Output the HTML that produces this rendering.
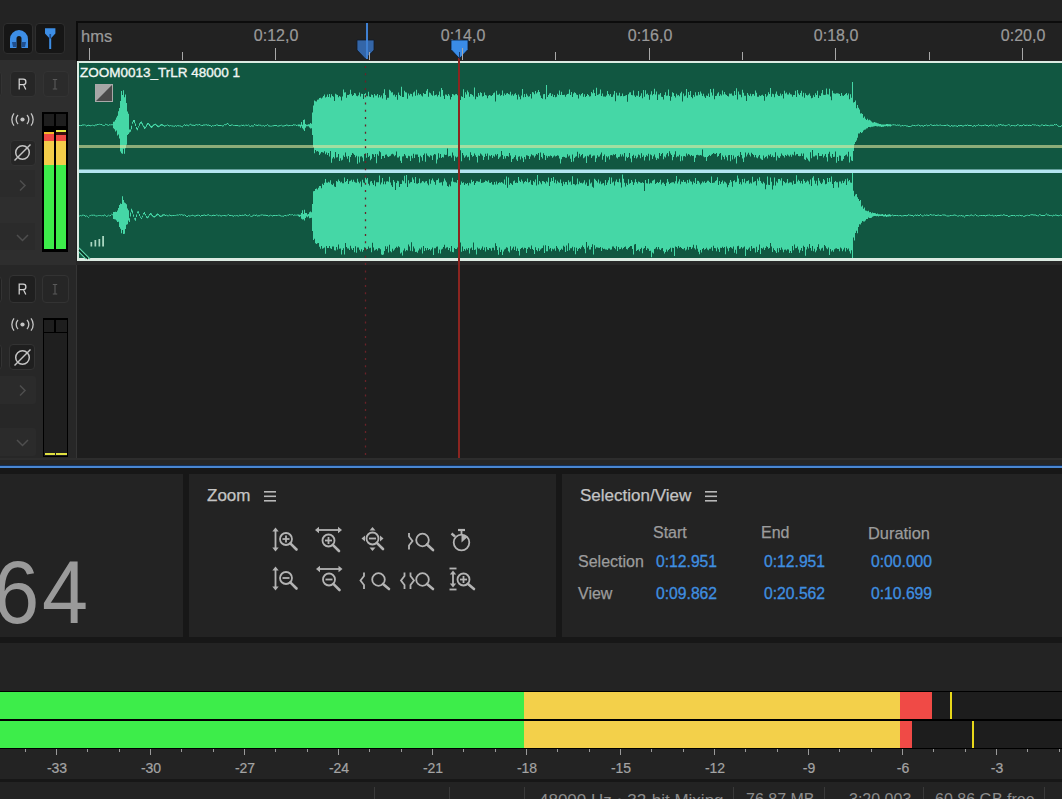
<!DOCTYPE html>
<html><head><meta charset="utf-8">
<style>
*{margin:0;padding:0;box-sizing:border-box}
html,body{width:1062px;height:799px;overflow:hidden;background:#232323;font-family:"Liberation Sans",sans-serif}
.a{position:absolute}
.btn{position:absolute;background:#1f1f1f;border:1px solid #353535;border-radius:4px}
.lbl{position:absolute;color:#9c9c9c;font-size:16px;white-space:nowrap;line-height:1;-webkit-text-stroke:0.25px currentColor}
.val{position:absolute;color:#3f8fe0;font-size:15.7px;white-space:nowrap;line-height:1;-webkit-text-stroke:0.3px currentColor}
.tick{position:absolute;width:1px;background:#a8a8a8;z-index:3}
.rl{position:absolute;color:#9a9a9a;font-size:16px;line-height:1;white-space:nowrap;-webkit-text-stroke:0.2px currentColor}
.gl{position:absolute;color:#a0a0a0;font-size:13px;line-height:1;white-space:nowrap}
.sb{position:absolute;color:#8c8c8c;font-size:16px;line-height:1;white-space:nowrap;top:792px}
.sep{position:absolute;width:1px;background:#3a3a3a;top:787px;height:12px}
</style></head><body>

<!-- top area -->
<div class="a" style="left:0;top:0;width:1062px;height:22px;background:#232323"></div>

<!-- magnet & marker buttons -->
<div class="btn" style="left:3px;top:23px;width:30px;height:31px;background:#161616;border-color:#2e2e2e"></div>
<div class="btn" style="left:35px;top:23px;width:30px;height:31px;background:#161616;border-color:#2e2e2e"></div>
<svg class="a" style="left:0;top:0" width="80" height="60">
  <path d="M10,48 L10,39 A9,9 0 0 1 28,39 L28,48 L21.5,48 L21.5,38.5 A2.5,2.5 0 0 0 16.5,38.5 L16.5,48 Z" fill="#3d8ee6"/>
  <path d="M12,42 L16,42 L16,47 L13,47 Z" fill="#1f4f90"/>
  <path d="M22,42 L26,42 L25,47 L22,47 Z" fill="#1f4f90"/>
  <path d="M45,28.2 L55.4,28.2 L55.4,33.5 L51.2,38 L51.2,49 L49.2,49 L49.2,38 L45,33.5 Z" fill="#3d8ee6"/>
  <rect x="49.4" y="34" width="1.7" height="4.5" fill="#1f4f90"/>
</svg>

<!-- ruler -->
<div class="a" style="left:75.5px;top:21px;width:987px;height:40px;background:#222;border-top:2px solid #0c0c0c;border-left:2px solid #0c0c0c"></div>
<div class="rl" style="left:81px;top:27.5px;font-size:16.5px">hms</div>
<div class="tick" style="left:89px;top:48px;height:12px"></div>
<div class="tick" style="left:182px;top:52px;height:8px"></div>
<div class="tick" style="left:275px;top:48px;height:12px"></div>
<div class="rl" style="left:253.8px;top:28px;width:44.5px;text-align:center">0:12,0</div>
<div class="tick" style="left:369px;top:52px;height:8px"></div>
<div class="tick" style="left:462px;top:48px;height:12px"></div>
<div class="rl" style="left:440.8px;top:28px;width:44.5px;text-align:center">0:14,0</div>
<div class="tick" style="left:555px;top:52px;height:8px"></div>
<div class="tick" style="left:649px;top:48px;height:12px"></div>
<div class="rl" style="left:627.8px;top:28px;width:44.5px;text-align:center">0:16,0</div>
<div class="tick" style="left:742px;top:52px;height:8px"></div>
<div class="tick" style="left:835px;top:48px;height:12px"></div>
<div class="rl" style="left:813.8px;top:28px;width:44.5px;text-align:center">0:18,0</div>
<div class="tick" style="left:929px;top:52px;height:8px"></div>
<div class="tick" style="left:1022px;top:48px;height:12px"></div>
<div class="rl" style="left:1000.8px;top:28px;width:44.5px;text-align:center">0:20,0</div>

<!-- track 1 header -->
<div class="a" style="left:0;top:60px;width:75.5px;height:205px;background:#2e2e2e"></div>
<div class="btn" style="left:-24px;top:71px;width:26px;height:26px;background:#262626;border-color:#333"></div>
<div class="btn" style="left:10px;top:71px;width:26px;height:26px;background:#262626;border-color:#333"></div>
<div class="btn" style="left:43px;top:71px;width:26px;height:26px;background:#2b2b2b;border-color:#333"></div>

<div class="btn" style="left:10px;top:140px;width:26px;height:26px;background:#262626;border-color:#333"></div>
<div class="a" style="left:0;top:170px;width:35px;height:27px;background:#2b2b2b"></div>
<div class="a" style="left:0;top:223px;width:35px;height:27px;background:#2b2b2b"></div>
<svg class="a" style="left:0;top:0" width="76" height="470">
<circle cx="22.5" cy="119.5" r="2.1" fill="#c4c4c4"/>
<path d="M18,115.0 A6.5,6.5 0 0 0 18,124.0" stroke="#c4c4c4" stroke-width="1.3" fill="none"/>
<path d="M27,115.0 A6.5,6.5 0 0 1 27,124.0" stroke="#c4c4c4" stroke-width="1.3" fill="none"/>
<path d="M14,113.3 A10,10 0 0 0 14,125.7" stroke="#c4c4c4" stroke-width="1.3" fill="none"/>
<path d="M31,113.3 A10,10 0 0 1 31,125.7" stroke="#c4c4c4" stroke-width="1.3" fill="none"/>
<circle cx="22.5" cy="152.5" r="6.8" stroke="#c4c4c4" stroke-width="1.5" fill="none"/>
<line x1="14.5" y1="160.5" x2="30.5" y2="144.5" stroke="#c4c4c4" stroke-width="1.5"/>
<path d="M52.8,79.5 H57.2 M55,79.5 V89 M52.8,89 H57.2" stroke="#5a5a5a" stroke-width="1.1" fill="none"/>
<path d="M19.2,89.5 V79.2 H23.2 A2.7,2.7 0 0 1 23.2,84.6 H19.2 M23.4,84.6 L25.8,89.5" stroke="#d4d4d4" stroke-width="1.25" fill="none"/>
<path d="M20,180.5 L25,185.5 L20,190.5" stroke="#4e4e4e" stroke-width="1.5" fill="none"/>
<path d="M17,235 L22.5,240.5 L28,235" stroke="#4e4e4e" stroke-width="1.5" fill="none"/>
</svg>
<div class="a" style="left:42px;top:112px;width:26px;height:140px;background:#000"></div>
<div class="a" style="left:44px;top:114px;width:10px;height:12px;background:#1e1e1e"></div>
<div class="a" style="left:56px;top:114px;width:10px;height:12px;background:#1e1e1e"></div>
<div class="a" style="left:44px;top:141px;width:10px;height:24px;background:#f3cd49"></div>
<div class="a" style="left:44px;top:165px;width:10px;height:84px;background:#3ded4a"></div>
<div class="a" style="left:56px;top:141px;width:10px;height:24px;background:#f3cd49"></div>
<div class="a" style="left:56px;top:165px;width:10px;height:84px;background:#3ded4a"></div>
<div class="a" style="left:44px;top:133px;width:10px;height:8px;background:#ef4a44"></div>
<div class="a" style="left:44px;top:131.5px;width:10px;height:2px;background:#f2b82a"></div>
<div class="a" style="left:56px;top:134.5px;width:10px;height:6.5px;background:#ef4a44"></div>
<div class="a" style="left:56px;top:132px;width:10px;height:2.5px;background:#3a1010"></div>
<div class="a" style="left:56px;top:130px;width:10px;height:2px;background:#e6ea40"></div>

<!-- clip -->
<div class="a" style="left:76px;top:261px;width:986px;height:4px;background:#282828"></div>
<div class="a" style="left:77px;top:61px;width:985px;height:200px;background:#115741;border:2px solid #dcebe2;border-bottom-width:3px;border-right:none"></div>
<svg class="a" style="left:0;top:0" width="1062" height="265">
  <path d="M79,125.1 80,125.1 80,125.2 81,125.2 81,125.0 82,125.0 82,124.6 83,124.6 83,124.6 84,124.6 84,124.4 85,124.4 85,124.7 86,124.7 86,125.5 87,125.5 87,125.1 88,125.1 88,124.8 89,124.8 89,125.1 90,125.1 90,125.3 91,125.3 91,125.2 92,125.2 92,124.7 93,124.7 93,124.9 94,124.9 94,125.3 95,125.3 95,124.6 96,124.6 96,124.6 97,124.6 97,124.0 98,124.0 98,123.9 99,123.9 99,123.7 100,123.7 100,124.2 101,124.2 101,124.1 102,124.1 102,124.7 103,124.7 103,124.9 104,124.9 104,124.9 105,124.9 105,123.8 106,123.8 106,124.2 107,124.2 107,124.6 108,124.6 108,124.9 109,124.9 109,124.3 110,124.3 110,124.4 111,124.4 111,124.3 112,124.3 112,124.3 113,124.3 113,121.8 114,121.8 114,121.6 115,121.6 115,119.8 116,119.8 116,117.4 117,117.4 117,115.7 118,115.7 118,111.2 119,111.2 119,107.9 120,107.9 120,100.9 121,100.9 121,90.9 122,90.9 122,94.9 123,94.9 123,90.3 124,90.3 124,97.3 125,97.3 125,94.4 126,94.4 126,102.9 127,102.9 127,111.4 128,111.4 128,113.7 129,113.7 129,129.5 130,129.5 130,129.5 131,129.5 131,125.8 132,125.8 132,121.7 133,121.7 133,119.9 134,119.9 134,119.9 135,119.9 135,123.6 136,123.6 136,126.9 137,126.9 137,128.1 138,128.1 138,126.2 139,126.2 139,123.3 140,123.3 140,121.9 141,121.9 141,121.6 142,121.6 142,123.3 143,123.3 143,125.6 144,125.6 144,126.6 145,126.6 145,126.7 146,126.7 146,124.6 147,124.6 147,122.9 148,122.9 148,122.9 149,122.9 149,123.9 150,123.9 150,125.5 151,125.5 151,126.1 152,126.1 152,125.6 153,125.6 153,124.6 154,124.6 154,123.9 155,123.9 155,123.8 156,123.8 156,124.5 157,124.5 157,125.3 158,125.3 158,125.7 159,125.7 159,125.4 160,125.4 160,124.4 161,124.4 161,123.9 162,123.9 162,124.2 163,124.2 163,124.9 164,124.9 164,125.4 165,125.4 165,125.3 166,125.3 166,124.9 167,124.9 167,124.4 168,124.4 168,125.1 169,125.1 169,125.5 170,125.5 170,125.2 171,125.2 171,125.4 172,125.4 172,125.6 173,125.6 173,125.7 174,125.7 174,125.8 175,125.8 175,125.2 176,125.2 176,125.8 177,125.8 177,124.9 178,124.9 178,125.3 179,125.3 179,125.4 180,125.4 180,125.6 181,125.6 181,126.2 182,126.2 182,126.3 183,126.3 183,125.2 184,125.2 184,124.3 185,124.3 185,125.1 186,125.1 186,124.6 187,124.6 187,124.8 188,124.8 188,125.3 189,125.3 189,124.4 190,124.4 190,123.8 191,123.8 191,124.5 192,124.5 192,124.8 193,124.8 193,124.8 194,124.8 194,125.0 195,125.0 195,124.6 196,124.6 196,124.2 197,124.2 197,124.5 198,124.5 198,124.4 199,124.4 199,124.0 200,124.0 200,124.7 201,124.7 201,124.9 202,124.9 202,125.1 203,125.1 203,124.6 204,124.6 204,124.6 205,124.6 205,124.4 206,124.4 206,124.3 207,124.3 207,124.8 208,124.8 208,124.6 209,124.6 209,125.0 210,125.0 210,125.2 211,125.2 211,126.0 212,126.0 212,124.9 213,124.9 213,125.4 214,125.4 214,125.2 215,125.2 215,125.1 216,125.1 216,124.4 217,124.4 217,124.5 218,124.5 218,125.1 219,125.1 219,125.1 220,125.1 220,125.1 221,125.1 221,124.9 222,124.9 222,125.5 223,125.5 223,125.3 224,125.3 224,124.2 225,124.2 225,124.3 226,124.3 226,123.8 227,123.8 227,123.0 228,123.0 228,123.8 229,123.8 229,125.0 230,125.0 230,125.0 231,125.0 231,124.5 232,124.5 232,124.4 233,124.4 233,125.2 234,125.2 234,125.2 235,125.2 235,125.1 236,125.1 236,125.1 237,125.1 237,125.1 238,125.1 238,125.4 239,125.4 239,125.5 240,125.5 240,125.4 241,125.4 241,124.7 242,124.7 242,125.1 243,125.1 243,124.8 244,124.8 244,125.4 245,125.4 245,124.7 246,124.7 246,124.8 247,124.8 247,124.9 248,124.9 248,124.4 249,124.4 249,125.5 250,125.5 250,125.9 251,125.9 251,125.3 252,125.3 252,125.5 253,125.5 253,125.5 254,125.5 254,124.1 255,124.1 255,124.7 256,124.7 256,124.8 257,124.8 257,125.0 258,125.0 258,124.5 259,124.5 259,124.7 260,124.7 260,124.8 261,124.8 261,125.4 262,125.4 262,125.4 263,125.4 263,125.2 264,125.2 264,125.8 265,125.8 265,125.2 266,125.2 266,124.9 267,124.9 267,124.2 268,124.2 268,125.3 269,125.3 269,125.6 270,125.6 270,125.7 271,125.7 271,125.7 272,125.7 272,125.4 273,125.4 273,125.3 274,125.3 274,125.1 275,125.1 275,125.0 276,125.0 276,125.0 277,125.0 277,125.7 278,125.7 278,125.6 279,125.6 279,125.3 280,125.3 280,124.9 281,124.9 281,124.7 282,124.7 282,125.6 283,125.6 283,125.6 284,125.6 284,125.3 285,125.3 285,125.0 286,125.0 286,124.5 287,124.5 287,124.8 288,124.8 288,125.3 289,125.3 289,125.0 290,125.0 290,124.9 291,124.9 291,124.9 292,124.9 292,125.0 293,125.0 293,124.3 294,124.3 294,124.6 295,124.6 295,124.4 296,124.4 296,125.1 297,125.1 297,124.7 298,124.7 298,124.4 299,124.4 299,124.5 300,124.5 300,124.7 301,124.7 301,122.0 302,122.0 302,124.8 303,124.8 303,119.9 304,119.9 304,119.4 305,119.4 305,123.9 306,123.9 306,124.8 307,124.8 307,124.8 308,124.8 308,124.2 309,124.2 309,124.2 310,124.2 310,123.0 311,123.0 311,123.8 312,123.8 312,112.4 313,112.4 313,105.5 314,105.5 314,100.6 315,100.6 315,101.3 316,101.3 316,101.4 317,101.4 317,99.7 318,99.7 318,99.5 319,99.5 319,98.1 320,98.1 320,97.7 321,97.7 321,98.5 322,98.5 322,97.5 323,97.5 323,96.1 324,96.1 324,94.4 325,94.4 325,97.6 326,97.6 326,96.8 327,96.8 327,94.5 328,94.5 328,97.0 329,97.0 329,94.1 330,94.1 330,97.5 331,97.5 331,94.2 332,94.2 332,96.0 333,96.0 333,96.8 334,96.8 334,100.9 335,100.9 335,93.7 336,93.7 336,94.5 337,94.5 337,95.0 338,95.0 338,97.3 339,97.3 339,96.1 340,96.1 340,96.7 341,96.7 341,100.6 342,100.6 342,96.5 343,96.5 343,89.6 344,89.6 344,92.4 345,92.4 345,92.2 346,92.2 346,97.7 347,97.7 347,95.1 348,95.1 348,95.1 349,95.1 349,94.2 350,94.2 350,89.8 351,89.8 351,94.2 352,94.2 352,96.1 353,96.1 353,94.9 354,94.9 354,92.9 355,92.9 355,93.5 356,93.5 356,95.7 357,95.7 357,96.3 358,96.3 358,95.2 359,95.2 359,92.6 360,92.6 360,96.4 361,96.4 361,93.7 362,93.7 362,93.9 363,93.9 363,98.9 364,98.9 364,93.9 365,93.9 365,93.3 366,93.3 366,95.7 367,95.7 367,96.2 368,96.2 368,91.7 369,91.7 369,96.4 370,96.4 370,96.9 371,96.9 371,94.5 372,94.5 372,94.9 373,94.9 373,97.6 374,97.6 374,94.1 375,94.1 375,95.4 376,95.4 376,95.6 377,95.6 377,93.9 378,93.9 378,97.4 379,97.4 379,95.0 380,95.0 380,97.2 381,97.2 381,95.6 382,95.6 382,98.6 383,98.6 383,93.3 384,93.3 384,89.3 385,89.3 385,94.9 386,94.9 386,99.8 387,99.8 387,97.7 388,97.7 388,97.8 389,97.8 389,89.7 390,89.7 390,90.7 391,90.7 391,92.4 392,92.4 392,92.2 393,92.2 393,95.2 394,95.2 394,94.5 395,94.5 395,96.8 396,96.8 396,95.1 397,95.1 397,99.8 398,99.8 398,92.6 399,92.6 399,95.0 400,95.0 400,95.9 401,95.9 401,86.8 402,86.8 402,96.9 403,96.9 403,96.9 404,96.9 404,90.7 405,90.7 405,92.2 406,92.2 406,92.6 407,92.6 407,98.8 408,98.8 408,93.4 409,93.4 409,95.5 410,95.5 410,93.8 411,93.8 411,93.9 412,93.9 412,96.4 413,96.4 413,92.6 414,92.6 414,91.5 415,91.5 415,95.8 416,95.8 416,89.7 417,89.7 417,95.3 418,95.3 418,93.2 419,93.2 419,94.8 420,94.8 420,93.9 421,93.9 421,95.6 422,95.6 422,96.6 423,96.6 423,93.1 424,93.1 424,93.9 425,93.9 425,94.0 426,94.0 426,90.8 427,90.8 427,89.1 428,89.1 428,96.7 429,96.7 429,92.4 430,92.4 430,93.2 431,93.2 431,94.7 432,94.7 432,95.7 433,95.7 433,90.9 434,90.9 434,95.5 435,95.5 435,95.0 436,95.0 436,94.5 437,94.5 437,96.4 438,96.4 438,94.9 439,94.9 439,91.6 440,91.6 440,96.8 441,96.8 441,88.1 442,88.1 442,90.0 443,90.0 443,95.8 444,95.8 444,98.9 445,98.9 445,94.6 446,94.6 446,94.8 447,94.8 447,95.9 448,95.9 448,94.1 449,94.1 449,95.4 450,95.4 450,99.5 451,99.5 451,96.9 452,96.9 452,94.1 453,94.1 453,94.6 454,94.6 454,95.2 455,95.2 455,94.3 456,94.3 456,94.0 457,94.0 457,95.2 458,95.2 458,93.9 459,93.9 459,95.2 460,95.2 460,100.0 461,100.0 461,96.2 462,96.2 462,96.9 463,96.9 463,89.2 464,89.2 464,98.1 465,98.1 465,92.2 466,92.2 466,94.5 467,94.5 467,90.6 468,90.6 468,92.2 469,92.2 469,96.8 470,96.8 470,94.1 471,94.1 471,94.2 472,94.2 472,95.0 473,95.0 473,96.4 474,96.4 474,87.6 475,87.6 475,99.2 476,99.2 476,96.5 477,96.5 477,96.9 478,96.9 478,93.1 479,93.1 479,95.4 480,95.4 480,92.2 481,92.2 481,92.9 482,92.9 482,96.5 483,96.5 483,95.9 484,95.9 484,92.6 485,92.6 485,94.9 486,94.9 486,95.6 487,95.6 487,98.2 488,98.2 488,95.8 489,95.8 489,95.0 490,95.0 490,95.6 491,95.6 491,96.1 492,96.1 492,94.9 493,94.9 493,93.2 494,93.2 494,92.5 495,92.5 495,101.4 496,101.4 496,90.8 497,90.8 497,94.7 498,94.7 498,94.7 499,94.7 499,93.8 500,93.8 500,95.8 501,95.8 501,94.9 502,94.9 502,90.4 503,90.4 503,95.8 504,95.8 504,93.4 505,93.4 505,95.0 506,95.0 506,93.6 507,93.6 507,93.1 508,93.1 508,93.9 509,93.9 509,94.4 510,94.4 510,91.8 511,91.8 511,95.6 512,95.6 512,94.2 513,94.2 513,95.7 514,95.7 514,94.3 515,94.3 515,93.3 516,93.3 516,95.0 517,95.0 517,99.5 518,99.5 518,94.4 519,94.4 519,96.8 520,96.8 520,99.3 521,99.3 521,95.6 522,95.6 522,89.0 523,89.0 523,97.2 524,97.2 524,94.0 525,94.0 525,97.1 526,97.1 526,93.8 527,93.8 527,95.5 528,95.5 528,96.7 529,96.7 529,96.3 530,96.3 530,94.0 531,94.0 531,98.6 532,98.6 532,92.1 533,92.1 533,92.5 534,92.5 534,94.3 535,94.3 535,91.0 536,91.0 536,93.4 537,93.4 537,92.3 538,92.3 538,90.0 539,90.0 539,92.0 540,92.0 540,95.6 541,95.6 541,98.0 542,98.0 542,98.7 543,98.7 543,94.2 544,94.2 544,94.1 545,94.1 545,99.3 546,99.3 546,85.1 547,85.1 547,96.9 548,96.9 548,94.9 549,94.9 549,93.6 550,93.6 550,92.9 551,92.9 551,96.1 552,96.1 552,94.2 553,94.2 553,96.9 554,96.9 554,95.1 555,95.1 555,97.2 556,97.2 556,96.7 557,96.7 557,93.8 558,93.8 558,95.0 559,95.0 559,90.5 560,90.5 560,95.0 561,95.0 561,91.8 562,91.8 562,95.1 563,95.1 563,95.0 564,95.0 564,94.7 565,94.7 565,96.7 566,96.7 566,94.8 567,94.8 567,93.9 568,93.9 568,93.7 569,93.7 569,89.5 570,89.5 570,94.9 571,94.9 571,92.0 572,92.0 572,97.1 573,97.1 573,93.6 574,93.6 574,92.2 575,92.2 575,93.1 576,93.1 576,94.6 577,94.6 577,95.0 578,95.0 578,98.5 579,98.5 579,94.3 580,94.3 580,95.6 581,95.6 581,94.0 582,94.0 582,93.0 583,93.0 583,96.7 584,96.7 584,94.2 585,94.2 585,97.0 586,97.0 586,96.1 587,96.1 587,94.0 588,94.0 588,94.9 589,94.9 589,96.6 590,96.6 590,96.3 591,96.3 591,92.0 592,92.0 592,93.2 593,93.2 593,89.8 594,89.8 594,93.1 595,93.1 595,96.0 596,96.0 596,87.7 597,87.7 597,95.0 598,95.0 598,94.4 599,94.4 599,93.7 600,93.7 600,89.4 601,89.4 601,96.0 602,96.0 602,93.5 603,93.5 603,96.4 604,96.4 604,96.5 605,96.5 605,96.7 606,96.7 606,95.4 607,95.4 607,91.1 608,91.1 608,93.9 609,93.9 609,95.4 610,95.4 610,94.1 611,94.1 611,97.1 612,97.1 612,96.7 613,96.7 613,94.5 614,94.5 614,91.0 615,91.0 615,101.2 616,101.2 616,92.8 617,92.8 617,95.6 618,95.6 618,95.4 619,95.4 619,92.8 620,92.8 620,96.2 621,96.2 621,96.0 622,96.0 622,93.5 623,93.5 623,96.2 624,96.2 624,96.0 625,96.0 625,95.6 626,95.6 626,94.9 627,94.9 627,101.7 628,101.7 628,94.2 629,94.2 629,92.5 630,92.5 630,92.3 631,92.3 631,95.1 632,95.1 632,95.2 633,95.2 633,90.5 634,90.5 634,95.5 635,95.5 635,97.1 636,97.1 636,95.5 637,95.5 637,95.7 638,95.7 638,91.0 639,91.0 639,96.9 640,96.9 640,95.7 641,95.7 641,93.3 642,93.3 642,98.2 643,98.2 643,90.1 644,90.1 644,96.7 645,96.7 645,90.3 646,90.3 646,94.3 647,94.3 647,93.5 648,93.5 648,95.1 649,95.1 649,99.7 650,99.7 650,94.5 651,94.5 651,91.3 652,91.3 652,95.3 653,95.3 653,94.1 654,94.1 654,88.7 655,88.7 655,94.6 656,94.6 656,91.6 657,91.6 657,100.1 658,100.1 658,94.5 659,94.5 659,94.4 660,94.4 660,92.9 661,92.9 661,96.7 662,96.7 662,97.1 663,97.1 663,99.6 664,99.6 664,95.0 665,95.0 665,92.3 666,92.3 666,95.8 667,95.8 667,95.5 668,95.5 668,89.6 669,89.6 669,95.9 670,95.9 670,100.8 671,100.8 671,96.7 672,96.7 672,92.3 673,92.3 673,93.1 674,93.1 674,95.9 675,95.9 675,97.6 676,97.6 676,93.8 677,93.8 677,95.6 678,95.6 678,95.0 679,95.0 679,96.3 680,96.3 680,93.2 681,93.2 681,91.7 682,91.7 682,101.5 683,101.5 683,93.4 684,93.4 684,96.3 685,96.3 685,95.6 686,95.6 686,88.9 687,88.9 687,97.8 688,97.8 688,92.0 689,92.0 689,95.1 690,95.1 690,91.0 691,91.0 691,96.9 692,96.9 692,98.2 693,98.2 693,95.1 694,95.1 694,96.8 695,96.8 695,92.3 696,92.3 696,95.6 697,95.6 697,95.4 698,95.4 698,92.0 699,92.0 699,94.8 700,94.8 700,91.6 701,91.6 701,93.4 702,93.4 702,96.0 703,96.0 703,93.7 704,93.7 704,96.6 705,96.6 705,98.0 706,98.0 706,95.6 707,95.6 707,96.0 708,96.0 708,93.4 709,93.4 709,96.9 710,96.9 710,89.1 711,89.1 711,92.4 712,92.4 712,95.6 713,95.6 713,88.7 714,88.7 714,99.2 715,99.2 715,95.9 716,95.9 716,95.7 717,95.7 717,93.6 718,93.6 718,92.2 719,92.2 719,96.1 720,96.1 720,94.2 721,94.2 721,95.4 722,95.4 722,90.6 723,90.6 723,94.5 724,94.5 724,92.1 725,92.1 725,94.2 726,94.2 726,95.1 727,95.1 727,96.0 728,96.0 728,96.5 729,96.5 729,93.6 730,93.6 730,93.7 731,93.7 731,93.6 732,93.6 732,95.6 733,95.6 733,95.7 734,95.7 734,91.0 735,91.0 735,94.9 736,94.9 736,88.2 737,88.2 737,99.6 738,99.6 738,91.6 739,91.6 739,94.4 740,94.4 740,94.8 741,94.8 741,97.3 742,97.3 742,89.8 743,89.8 743,92.7 744,92.7 744,95.8 745,95.8 745,95.7 746,95.7 746,101.1 747,101.1 747,93.0 748,93.0 748,94.8 749,94.8 749,96.0 750,96.0 750,93.7 751,93.7 751,96.3 752,96.3 752,94.2 753,94.2 753,94.0 754,94.0 754,95.8 755,95.8 755,90.4 756,90.4 756,92.7 757,92.7 757,96.7 758,96.7 758,96.7 759,96.7 759,95.3 760,95.3 760,96.1 761,96.1 761,95.2 762,95.2 762,94.8 763,94.8 763,96.1 764,96.1 764,100.7 765,100.7 765,93.9 766,93.9 766,96.7 767,96.7 767,95.6 768,95.6 768,92.2 769,92.2 769,93.9 770,93.9 770,88.0 771,88.0 771,96.8 772,96.8 772,93.7 773,93.7 773,94.2 774,94.2 774,97.2 775,97.2 775,93.7 776,93.7 776,91.6 777,91.6 777,94.8 778,94.8 778,96.1 779,96.1 779,96.1 780,96.1 780,93.4 781,93.4 781,95.6 782,95.6 782,93.9 783,93.9 783,98.5 784,98.5 784,90.7 785,90.7 785,93.4 786,93.4 786,92.6 787,92.6 787,94.4 788,94.4 788,94.6 789,94.6 789,92.7 790,92.7 790,94.3 791,94.3 791,94.5 792,94.5 792,96.7 793,96.7 793,95.0 794,95.0 794,95.0 795,95.0 795,90.8 796,90.8 796,96.9 797,96.9 797,89.9 798,89.9 798,93.4 799,93.4 799,95.1 800,95.1 800,92.9 801,92.9 801,90.8 802,90.8 802,96.4 803,96.4 803,92.7 804,92.7 804,97.8 805,97.8 805,93.2 806,93.2 806,94.9 807,94.9 807,95.4 808,95.4 808,94.8 809,94.8 809,93.5 810,93.5 810,95.8 811,95.8 811,98.3 812,98.3 812,97.8 813,97.8 813,95.3 814,95.3 814,97.0 815,97.0 815,93.2 816,93.2 816,95.1 817,95.1 817,90.8 818,90.8 818,98.1 819,98.1 819,95.6 820,95.6 820,95.9 821,95.9 821,93.3 822,93.3 822,89.9 823,89.9 823,94.8 824,94.8 824,94.9 825,94.9 825,94.7 826,94.7 826,88.4 827,88.4 827,94.3 828,94.3 828,94.6 829,94.6 829,88.8 830,88.8 830,96.4 831,96.4 831,100.2 832,100.2 832,90.7 833,90.7 833,93.3 834,93.3 834,93.4 835,93.4 835,93.8 836,93.8 836,93.2 837,93.2 837,93.3 838,93.3 838,93.4 839,93.4 839,94.1 840,94.1 840,96.1 841,96.1 841,93.0 842,93.0 842,95.4 843,95.4 843,96.1 844,96.1 844,94.9 845,94.9 845,94.1 846,94.1 846,93.0 847,93.0 847,95.3 848,95.3 848,93.6 849,93.6 849,99.3 850,99.3 850,94.3 851,94.3 851,97.8 852,97.8 852,82.0 853,82.0 853,102.6 854,102.6 854,102.1 855,102.1 855,100.5 856,100.5 856,108.3 857,108.3 857,105.0 858,105.0 858,107.8 859,107.8 859,109.6 860,109.6 860,113.5 861,113.5 861,113.3 862,113.3 862,114.0 863,114.0 863,117.7 864,117.7 864,116.5 865,116.5 865,118.7 866,118.7 866,120.1 867,120.1 867,118.8 868,118.8 868,120.3 869,120.3 869,119.8 870,119.8 870,120.6 871,120.6 871,121.4 872,121.4 872,122.6 873,122.6 873,122.4 874,122.4 874,121.9 875,121.9 875,122.4 876,122.4 876,122.8 877,122.8 877,123.3 878,123.3 878,123.6 879,123.6 879,124.1 880,124.1 880,123.9 881,123.9 881,124.5 882,124.5 882,124.6 883,124.6 883,124.5 884,124.5 884,124.5 885,124.5 885,124.4 886,124.4 886,124.1 887,124.1 887,124.1 888,124.1 888,124.3 889,124.3 889,124.3 890,124.3 890,124.3 891,124.3 891,124.8 892,124.8 892,124.4 893,124.4 893,124.3 894,124.3 894,124.4 895,124.4 895,124.5 896,124.5 896,125.2 897,125.2 897,124.6 898,124.6 898,124.8 899,124.8 899,124.6 900,124.6 900,125.5 901,125.5 901,125.4 902,125.4 902,125.0 903,125.0 903,125.4 904,125.4 904,125.2 905,125.2 905,124.9 906,124.9 906,125.6 907,125.6 907,125.6 908,125.6 908,126.1 909,126.1 909,126.1 910,126.1 910,125.9 911,125.9 911,125.5 912,125.5 912,124.8 913,124.8 913,125.2 914,125.2 914,125.1 915,125.1 915,125.4 916,125.4 916,125.2 917,125.2 917,124.8 918,124.8 918,124.4 919,124.4 919,125.0 920,125.0 920,125.6 921,125.6 921,125.2 922,125.2 922,125.3 923,125.3 923,125.8 924,125.8 924,125.0 925,125.0 925,124.9 926,124.9 926,124.4 927,124.4 927,125.3 928,125.3 928,125.2 929,125.2 929,124.9 930,124.9 930,124.2 931,124.2 931,124.5 932,124.5 932,125.2 933,125.2 933,125.0 934,125.0 934,124.8 935,124.8 935,125.2 936,125.2 936,124.6 937,124.6 937,124.8 938,124.8 938,125.2 939,125.2 939,124.7 940,124.7 940,124.5 941,124.5 941,124.9 942,124.9 942,124.9 943,124.9 943,124.9 944,124.9 944,125.0 945,125.0 945,125.1 946,125.1 946,124.7 947,124.7 947,124.5 948,124.5 948,125.0 949,125.0 949,125.5 950,125.5 950,125.9 951,125.9 951,125.1 952,125.1 952,125.5 953,125.5 953,125.6 954,125.6 954,125.3 955,125.3 955,125.4 956,125.4 956,125.6 957,125.6 957,126.1 958,126.1 958,125.1 959,125.1 959,125.3 960,125.3 960,125.1 961,125.1 961,125.0 962,125.0 962,125.5 963,125.5 963,125.6 964,125.6 964,124.9 965,124.9 965,124.8 966,124.8 966,125.0 967,125.0 967,124.4 968,124.4 968,125.1 969,125.1 969,125.0 970,125.0 970,125.1 971,125.1 971,125.2 972,125.2 972,125.9 973,125.9 973,125.5 974,125.5 974,125.1 975,125.1 975,125.8 976,125.8 976,125.2 977,125.2 977,124.9 978,124.9 978,124.3 979,124.3 979,125.2 980,125.2 980,125.2 981,125.2 981,125.3 982,125.3 982,125.2 983,125.2 983,125.1 984,125.1 984,124.7 985,124.7 985,124.5 986,124.5 986,125.0 987,125.0 987,125.0 988,125.0 988,125.8 989,125.8 989,125.1 990,125.1 990,124.8 991,124.8 991,124.5 992,124.5 992,125.4 993,125.4 993,124.6 994,124.6 994,125.2 995,125.2 995,125.7 996,125.7 996,125.3 997,125.3 997,125.5 998,125.5 998,124.3 999,124.3 999,124.5 1000,124.5 1000,124.0 1001,124.0 1001,124.6 1002,124.6 1002,124.8 1003,124.8 1003,124.6 1004,124.6 1004,125.2 1005,125.2 1005,125.3 1006,125.3 1006,124.9 1007,124.9 1007,124.7 1008,124.7 1008,124.2 1009,124.2 1009,124.5 1010,124.5 1010,125.7 1011,125.7 1011,125.1 1012,125.1 1012,125.2 1013,125.2 1013,124.9 1014,124.9 1014,125.3 1015,125.3 1015,125.4 1016,125.4 1016,125.1 1017,125.1 1017,124.3 1018,124.3 1018,124.4 1019,124.4 1019,125.3 1020,125.3 1020,125.0 1021,125.0 1021,125.3 1022,125.3 1022,125.0 1023,125.0 1023,124.2 1024,124.2 1024,124.8 1025,124.8 1025,125.0 1026,125.0 1026,124.8 1027,124.8 1027,124.7 1028,124.7 1028,125.0 1029,125.0 1029,124.8 1030,124.8 1030,125.0 1031,125.0 1031,124.9 1032,124.9 1032,123.9 1033,123.9 1033,124.4 1034,124.4 1034,124.5 1035,124.5 1035,124.4 1036,124.4 1036,124.9 1037,124.9 1037,124.7 1038,124.7 1038,125.1 1039,125.1 1039,125.6 1040,125.6 1040,125.4 1041,125.4 1041,124.5 1042,124.5 1042,124.4 1043,124.4 1043,125.1 1044,125.1 1044,125.0 1045,125.0 1045,124.6 1046,124.6 1046,124.8 1047,124.8 1047,125.1 1048,125.1 1048,125.2 1049,125.2 1049,125.4 1050,125.4 1050,124.8 1051,124.8 1051,124.8 1052,124.8 1052,124.8 1053,124.8 1053,124.9 1054,124.9 1054,124.0 1055,124.0 1055,124.4 1056,124.4 1056,124.1 1057,124.1 1057,125.2 1058,125.2 1058,125.8 1059,125.8 1059,126.2 1060,126.2 1060,126.0 1061,126.0 1061,125.3 1062,125.3 1062,126.2 1061,126.2 1061,126.9 1060,126.9 1060,127.1 1059,127.1 1059,126.7 1058,126.7 1058,126.1 1057,126.1 1057,125.0 1056,125.0 1056,125.3 1055,125.3 1055,124.9 1054,124.9 1054,125.8 1053,125.8 1053,125.7 1052,125.7 1052,125.7 1051,125.7 1051,125.7 1050,125.7 1050,126.3 1049,126.3 1049,126.1 1048,126.1 1048,126.0 1047,126.0 1047,125.7 1046,125.7 1046,125.5 1045,125.5 1045,125.9 1044,125.9 1044,126.0 1043,126.0 1043,125.3 1042,125.3 1042,125.4 1041,125.4 1041,126.3 1040,126.3 1040,126.5 1039,126.5 1039,126.0 1038,126.0 1038,125.6 1037,125.6 1037,125.8 1036,125.8 1036,125.3 1035,125.3 1035,125.4 1034,125.4 1034,125.3 1033,125.3 1033,124.8 1032,124.8 1032,125.8 1031,125.8 1031,125.9 1030,125.9 1030,125.7 1029,125.7 1029,125.9 1028,125.9 1028,125.6 1027,125.6 1027,125.7 1026,125.7 1026,125.9 1025,125.9 1025,125.7 1024,125.7 1024,125.1 1023,125.1 1023,125.9 1022,125.9 1022,126.2 1021,126.2 1021,125.9 1020,125.9 1020,126.2 1019,126.2 1019,125.3 1018,125.3 1018,125.2 1017,125.2 1017,126.0 1016,126.0 1016,126.3 1015,126.3 1015,126.2 1014,126.2 1014,125.8 1013,125.8 1013,126.1 1012,126.1 1012,126.0 1011,126.0 1011,126.6 1010,126.6 1010,125.4 1009,125.4 1009,125.1 1008,125.1 1008,125.6 1007,125.6 1007,125.8 1006,125.8 1006,126.2 1005,126.2 1005,126.1 1004,126.1 1004,125.5 1003,125.5 1003,125.7 1002,125.7 1002,125.5 1001,125.5 1001,124.9 1000,124.9 1000,125.4 999,125.4 999,125.2 998,125.2 998,126.4 997,126.4 997,126.2 996,126.2 996,126.6 995,126.6 995,126.1 994,126.1 994,125.5 993,125.5 993,126.3 992,126.3 992,125.4 991,125.4 991,125.7 990,125.7 990,126.0 989,126.0 989,126.7 988,126.7 988,125.9 987,125.9 987,125.9 986,125.9 986,125.4 985,125.4 985,125.6 984,125.6 984,126.0 983,126.0 983,126.1 982,126.1 982,126.2 981,126.2 981,126.1 980,126.1 980,126.1 979,126.1 979,125.2 978,125.2 978,125.8 977,125.8 977,126.1 976,126.1 976,126.7 975,126.7 975,126.0 974,126.0 974,126.4 973,126.4 973,126.8 972,126.8 972,126.1 971,126.1 971,126.0 970,126.0 970,125.9 969,125.9 969,126.0 968,126.0 968,125.3 967,125.3 967,125.9 966,125.9 966,125.7 965,125.7 965,125.8 964,125.8 964,126.5 963,126.5 963,126.4 962,126.4 962,125.9 961,125.9 961,126.0 960,126.0 960,126.2 959,126.2 959,126.0 958,126.0 958,127.0 957,127.0 957,126.5 956,126.5 956,126.3 955,126.3 955,126.2 954,126.2 954,126.5 953,126.5 953,126.4 952,126.4 952,126.0 951,126.0 951,126.8 950,126.8 950,126.4 949,126.4 949,125.9 948,125.9 948,125.4 947,125.4 947,125.6 946,125.6 946,126.0 945,126.0 945,125.9 944,125.9 944,125.8 943,125.8 943,125.8 942,125.8 942,125.8 941,125.8 941,125.4 940,125.4 940,125.6 939,125.6 939,126.1 938,126.1 938,125.7 937,125.7 937,125.5 936,125.5 936,126.1 935,126.1 935,125.7 934,125.7 934,125.9 933,125.9 933,126.1 932,126.1 932,125.4 931,125.4 931,125.1 930,125.1 930,125.8 929,125.8 929,126.1 928,126.1 928,126.2 927,126.2 927,125.3 926,125.3 926,125.8 925,125.8 925,125.9 924,125.9 924,126.7 923,126.7 923,126.2 922,126.2 922,126.1 921,126.1 921,126.5 920,126.5 920,125.9 919,125.9 919,125.3 918,125.3 918,125.7 917,125.7 917,126.1 916,126.1 916,126.3 915,126.3 915,126.0 914,126.0 914,126.1 913,126.1 913,125.7 912,125.7 912,126.4 911,126.4 911,126.8 910,126.8 910,127.0 909,127.0 909,127.0 908,127.0 908,126.5 907,126.5 907,126.5 906,126.5 906,125.8 905,125.8 905,126.1 904,126.1 904,126.3 903,126.3 903,125.9 902,125.9 902,126.3 901,126.3 901,126.4 900,126.4 900,125.5 899,125.5 899,125.7 898,125.7 898,125.5 897,125.5 897,126.1 896,126.1 896,125.4 895,125.4 895,125.3 894,125.3 894,125.2 893,125.2 893,125.3 892,125.3 892,125.7 891,125.7 891,126.6 890,126.6 890,126.3 889,126.3 889,126.3 888,126.3 888,126.4 887,126.4 887,126.1 886,126.1 886,126.3 885,126.3 885,126.2 884,126.2 884,126.7 883,126.7 883,126.7 882,126.7 882,126.9 881,126.9 881,126.5 880,126.5 880,126.6 879,126.6 879,126.3 878,126.3 878,126.5 877,126.5 877,126.3 876,126.3 876,125.9 875,125.9 875,126.2 874,126.2 874,126.5 873,126.5 873,126.8 872,126.8 872,126.8 871,126.8 871,127.3 870,127.3 870,127.1 869,127.1 869,127.0 868,127.0 868,128.2 867,128.2 867,128.4 866,128.4 866,129.4 865,129.4 865,129.8 864,129.8 864,130.6 863,130.6 863,132.2 862,132.2 862,132.9 861,132.9 861,132.0 860,132.0 860,133.5 859,133.5 859,133.6 858,133.6 858,137.8 857,137.8 857,140.4 856,140.4 856,142.1 855,142.1 855,144.3 854,144.3 854,151.0 853,151.0 853,161.1 852,161.1 852,160.4 851,160.4 851,156.5 850,156.5 850,162.5 849,162.5 849,151.7 848,151.7 848,156.4 847,156.4 847,154.4 846,154.4 846,155.2 845,155.2 845,155.9 844,155.9 844,159.0 843,159.0 843,160.7 842,160.7 842,160.8 841,160.8 841,155.8 840,155.8 840,155.6 839,155.6 839,161.1 838,161.1 838,156.9 837,156.9 837,162.7 836,162.7 836,151.6 835,151.6 835,156.8 834,156.8 834,157.1 833,157.1 833,153.9 832,153.9 832,158.0 831,158.0 831,156.5 830,156.5 830,151.7 829,151.7 829,153.7 828,153.7 828,161.4 827,161.4 827,157.3 826,157.3 826,154.1 825,154.1 825,155.7 824,155.7 824,157.4 823,157.4 823,154.3 822,154.3 822,156.1 821,156.1 821,156.1 820,156.1 820,156.1 819,156.1 819,153.1 818,153.1 818,159.6 817,159.6 817,155.4 816,155.4 816,155.5 815,155.5 815,156.5 814,156.5 814,156.5 813,156.5 813,150.0 812,150.0 812,158.2 811,158.2 811,152.2 810,152.2 810,161.5 809,161.5 809,160.4 808,160.4 808,158.8 807,158.8 807,157.4 806,157.4 806,160.0 805,160.0 805,159.2 804,159.2 804,153.5 803,153.5 803,156.0 802,156.0 802,153.5 801,153.5 801,156.1 800,156.1 800,156.3 799,156.3 799,156.1 798,156.1 798,153.9 797,153.9 797,154.2 796,154.2 796,155.5 795,155.5 795,151.8 794,151.8 794,155.3 793,155.3 793,154.5 792,154.5 792,156.7 791,156.7 791,154.8 790,154.8 790,156.4 789,156.4 789,155.4 788,155.4 788,154.5 787,154.5 787,155.9 786,155.9 786,155.1 785,155.1 785,157.4 784,157.4 784,156.1 783,156.1 783,155.2 782,155.2 782,153.4 781,153.4 781,156.2 780,156.2 780,157.9 779,157.9 779,157.6 778,157.6 778,155.7 777,155.7 777,160.4 776,160.4 776,152.3 775,152.3 775,157.1 774,157.1 774,157.2 773,157.2 773,155.5 772,155.5 772,157.1 771,157.1 771,154.2 770,154.2 770,155.7 769,155.7 769,154.7 768,154.7 768,158.6 767,158.6 767,156.3 766,156.3 766,156.9 765,156.9 765,158.2 764,158.2 764,155.5 763,155.5 763,159.9 762,159.9 762,159.5 761,159.5 761,158.5 760,158.5 760,154.9 759,154.9 759,156.5 758,156.5 758,158.2 757,158.2 757,157.5 756,157.5 756,155.0 755,155.0 755,157.3 754,157.3 754,154.9 753,154.9 753,153.9 752,153.9 752,152.8 751,152.8 751,156.4 750,156.4 750,154.7 749,154.7 749,152.7 748,152.7 748,154.6 747,154.6 747,156.5 746,156.5 746,152.4 745,152.4 745,157.4 744,157.4 744,162.0 743,162.0 743,158.6 742,158.6 742,154.9 741,154.9 741,152.0 740,152.0 740,157.1 739,157.1 739,155.6 738,155.6 738,156.0 737,156.0 737,163.4 736,163.4 736,157.3 735,157.3 735,158.8 734,158.8 734,155.6 733,155.6 733,159.4 732,159.4 732,155.1 731,155.1 731,161.2 730,161.2 730,155.1 729,155.1 729,155.2 728,155.2 728,160.6 727,160.6 727,157.2 726,157.2 726,155.5 725,155.5 725,159.2 724,159.2 724,157.0 723,157.0 723,155.5 722,155.5 722,159.8 721,159.8 721,153.0 720,153.0 720,153.7 719,153.7 719,156.0 718,156.0 718,156.7 717,156.7 717,153.0 716,153.0 716,154.0 715,154.0 715,153.8 714,153.8 714,152.9 713,152.9 713,153.9 712,153.9 712,154.7 711,154.7 711,155.9 710,155.9 710,155.1 709,155.1 709,156.1 708,156.1 708,157.1 707,157.1 707,161.0 706,161.0 706,157.1 705,157.1 705,157.3 704,157.3 704,156.5 703,156.5 703,149.5 702,149.5 702,155.5 701,155.5 701,154.9 700,154.9 700,155.6 699,155.6 699,155.3 698,155.3 698,154.7 697,154.7 697,155.0 696,155.0 696,157.8 695,157.8 695,162.0 694,162.0 694,155.8 693,155.8 693,155.9 692,155.9 692,155.0 691,155.0 691,156.2 690,156.2 690,154.7 689,154.7 689,154.0 688,154.0 688,155.6 687,155.6 687,153.5 686,153.5 686,156.7 685,156.7 685,155.9 684,155.9 684,156.2 683,156.2 683,160.6 682,160.6 682,156.2 681,156.2 681,161.3 680,161.3 680,154.8 679,154.8 679,156.4 678,156.4 678,156.3 677,156.3 677,157.2 676,157.2 676,151.3 675,151.3 675,154.4 674,154.4 674,157.0 673,157.0 673,160.3 672,160.3 672,155.0 671,155.0 671,153.6 670,153.6 670,151.3 669,151.3 669,156.2 668,156.2 668,153.0 667,153.0 667,154.4 666,154.4 666,157.4 665,157.4 665,156.4 664,156.4 664,159.2 663,159.2 663,152.9 662,152.9 662,154.1 661,154.1 661,156.0 660,156.0 660,153.1 659,153.1 659,158.7 658,158.7 658,158.3 657,158.3 657,159.9 656,159.9 656,157.6 655,157.6 655,154.5 654,154.5 654,156.2 653,156.2 653,159.1 652,159.1 652,155.2 651,155.2 651,154.5 650,154.5 650,160.6 649,160.6 649,153.8 648,153.8 648,156.3 647,156.3 647,155.3 646,155.3 646,156.9 645,156.9 645,160.5 644,160.5 644,155.6 643,155.6 643,157.0 642,157.0 642,153.3 641,153.3 641,158.2 640,158.2 640,155.2 639,155.2 639,154.5 638,154.5 638,157.2 637,157.2 637,158.4 636,158.4 636,155.8 635,155.8 635,157.9 634,157.9 634,154.8 633,154.8 633,156.1 632,156.1 632,162.3 631,162.3 631,158.6 630,158.6 630,152.9 629,152.9 629,157.1 628,157.1 628,158.0 627,158.0 627,156.7 626,156.7 626,160.7 625,160.7 625,153.0 624,153.0 624,156.6 623,156.6 623,154.5 622,154.5 622,156.5 621,156.5 621,154.3 620,154.3 620,156.7 619,156.7 619,157.1 618,157.1 618,158.6 617,158.6 617,157.5 616,157.5 616,153.9 615,153.9 615,154.9 614,154.9 614,154.3 613,154.3 613,155.5 612,155.5 612,155.1 611,155.1 611,155.2 610,155.2 610,159.6 609,159.6 609,156.2 608,156.2 608,157.5 607,157.5 607,156.2 606,156.2 606,162.1 605,162.1 605,154.5 604,154.5 604,156.1 603,156.1 603,159.8 602,159.8 602,152.4 601,152.4 601,154.6 600,154.6 600,156.5 599,156.5 599,156.8 598,156.8 598,155.3 597,155.3 597,158.2 596,158.2 596,161.9 595,161.9 595,155.4 594,155.4 594,155.4 593,155.4 593,156.3 592,156.3 592,158.0 591,158.0 591,154.5 590,154.5 590,154.8 589,154.8 589,156.4 588,156.4 588,155.8 587,155.8 587,162.9 586,162.9 586,156.3 585,156.3 585,157.5 584,157.5 584,158.3 583,158.3 583,154.0 582,154.0 582,155.0 581,155.0 581,156.5 580,156.5 580,153.8 579,153.8 579,157.7 578,157.7 578,151.8 577,151.8 577,156.3 576,156.3 576,156.8 575,156.8 575,158.1 574,158.1 574,161.5 573,161.5 573,154.6 572,154.6 572,162.0 571,162.0 571,158.8 570,158.8 570,155.5 569,155.5 569,156.5 568,156.5 568,154.3 567,154.3 567,157.7 566,157.7 566,157.7 565,157.7 565,157.1 564,157.1 564,156.7 563,156.7 563,156.9 562,156.9 562,159.2 561,159.2 561,163.4 560,163.4 560,158.4 559,158.4 559,155.7 558,155.7 558,155.3 557,155.3 557,156.0 556,156.0 556,156.4 555,156.4 555,155.5 554,155.5 554,156.5 553,156.5 553,157.7 552,157.7 552,155.9 551,155.9 551,155.6 550,155.6 550,156.6 549,156.6 549,155.9 548,155.9 548,157.7 547,157.7 547,155.7 546,155.7 546,159.9 545,159.9 545,155.0 544,155.0 544,153.2 543,153.2 543,158.6 542,158.6 542,157.1 541,157.1 541,152.4 540,152.4 540,159.9 539,159.9 539,153.0 538,153.0 538,154.8 537,154.8 537,154.1 536,154.1 536,155.7 535,155.7 535,157.5 534,157.5 534,155.6 533,155.6 533,155.3 532,155.3 532,154.3 531,154.3 531,156.6 530,156.6 530,159.0 529,159.0 529,156.1 528,156.1 528,155.5 527,155.5 527,155.2 526,155.2 526,159.3 525,159.3 525,157.1 524,157.1 524,162.1 523,162.1 523,158.2 522,158.2 522,156.4 521,156.4 521,159.6 520,159.6 520,156.2 519,156.2 519,156.7 518,156.7 518,161.0 517,161.0 517,159.6 516,159.6 516,155.3 515,155.3 515,157.1 514,157.1 514,158.5 513,158.5 513,159.0 512,159.0 512,162.0 511,162.0 511,155.4 510,155.4 510,152.9 509,152.9 509,156.7 508,156.7 508,156.0 507,156.0 507,155.9 506,155.9 506,158.5 505,158.5 505,156.3 504,156.3 504,159.0 503,159.0 503,154.9 502,154.9 502,150.9 501,150.9 501,156.6 500,156.6 500,157.4 499,157.4 499,158.9 498,158.9 498,153.9 497,153.9 497,155.4 496,155.4 496,154.2 495,154.2 495,156.8 494,156.8 494,155.7 493,155.7 493,158.1 492,158.1 492,154.9 491,154.9 491,156.3 490,156.3 490,155.4 489,155.4 489,159.7 488,159.7 488,153.6 487,153.6 487,156.1 486,156.1 486,153.8 485,153.8 485,157.0 484,157.0 484,160.1 483,160.1 483,155.7 482,155.7 482,154.5 481,154.5 481,153.5 480,153.5 480,156.0 479,156.0 479,155.4 478,155.4 478,162.4 477,162.4 477,157.1 476,157.1 476,155.2 475,155.2 475,153.6 474,153.6 474,155.9 473,155.9 473,156.8 472,156.8 472,154.9 471,154.9 471,152.3 470,152.3 470,160.3 469,160.3 469,156.8 468,156.8 468,157.3 467,157.3 467,155.3 466,155.3 466,156.6 465,156.6 465,157.7 464,157.7 464,155.3 463,155.3 463,152.9 462,152.9 462,161.3 461,161.3 461,150.3 460,150.3 460,158.3 459,158.3 459,158.6 458,158.6 458,156.8 457,156.8 457,157.4 456,157.4 456,156.5 455,156.5 455,160.9 454,160.9 454,155.6 453,155.6 453,152.5 452,152.5 452,157.4 451,157.4 451,155.8 450,155.8 450,156.0 449,156.0 449,156.5 448,156.5 448,148.5 447,148.5 447,154.8 446,154.8 446,154.9 445,154.9 445,154.4 444,154.4 444,157.5 443,157.5 443,157.1 442,157.1 442,158.1 441,158.1 441,153.9 440,153.9 440,157.8 439,157.8 439,153.2 438,153.2 438,159.4 437,159.4 437,163.4 436,163.4 436,154.6 435,154.6 435,153.9 434,153.9 434,155.3 433,155.3 433,160.1 432,160.1 432,155.8 431,155.8 431,155.2 430,155.2 430,157.3 429,157.3 429,156.2 428,156.2 428,155.5 427,155.5 427,153.4 426,153.4 426,161.8 425,161.8 425,153.4 424,153.4 424,155.1 423,155.1 423,160.8 422,160.8 422,157.3 421,157.3 421,155.8 420,155.8 420,162.6 419,162.6 419,157.0 418,157.0 418,154.5 417,154.5 417,154.6 416,154.6 416,154.6 415,154.6 415,158.0 414,158.0 414,153.8 413,153.8 413,158.2 412,158.2 412,155.8 411,155.8 411,161.0 410,161.0 410,156.2 409,156.2 409,155.8 408,155.8 408,158.2 407,158.2 407,157.9 406,157.9 406,155.5 405,155.5 405,154.0 404,154.0 404,156.3 403,156.3 403,156.6 402,156.6 402,163.0 401,163.0 401,160.8 400,160.8 400,156.3 399,156.3 399,157.5 398,157.5 398,157.6 397,157.6 397,151.4 396,151.4 396,155.3 395,155.3 395,156.3 394,156.3 394,154.6 393,154.6 393,153.7 392,153.7 392,154.2 391,154.2 391,155.7 390,155.7 390,156.3 389,156.3 389,157.0 388,157.0 388,156.3 387,156.3 387,154.5 386,154.5 386,154.7 385,154.7 385,157.9 384,157.9 384,155.9 383,155.9 383,156.1 382,156.1 382,158.9 381,158.9 381,152.2 380,152.2 380,151.3 379,151.3 379,155.7 378,155.7 378,154.3 377,154.3 377,163.3 376,163.3 376,153.9 375,153.9 375,156.9 374,156.9 374,154.4 373,154.4 373,154.1 372,154.1 372,158.7 371,158.7 371,160.2 370,160.2 370,155.8 369,155.8 369,157.0 368,157.0 368,153.1 367,153.1 367,157.7 366,157.7 366,153.9 365,153.9 365,153.9 364,153.9 364,161.2 363,161.2 363,157.6 362,157.6 362,156.3 361,156.3 361,156.5 360,156.5 360,162.4 359,162.4 359,156.5 358,156.5 358,163.8 357,163.8 357,155.7 356,155.7 356,157.2 355,157.2 355,154.9 354,154.9 354,153.8 353,153.8 353,153.0 352,153.0 352,155.0 351,155.0 351,156.9 350,156.9 350,162.3 349,162.3 349,155.9 348,155.9 348,158.8 347,158.8 347,156.5 346,156.5 346,152.5 345,152.5 345,157.0 344,157.0 344,155.5 343,155.5 343,159.8 342,159.8 342,160.4 341,160.4 341,158.3 340,158.3 340,161.0 339,161.0 339,154.1 338,154.1 338,157.2 337,157.2 337,157.4 336,157.4 336,151.9 335,151.9 335,158.6 334,158.6 334,157.1 333,157.1 333,158.4 332,158.4 332,162.7 331,162.7 331,151.0 330,151.0 330,156.4 329,156.4 329,152.9 328,152.9 328,154.9 327,154.9 327,152.4 326,152.4 326,154.3 325,154.3 325,151.2 324,151.2 324,152.7 323,152.7 323,152.2 322,152.2 322,151.9 321,151.9 321,153.6 320,153.6 320,154.9 319,154.9 319,151.8 318,151.8 318,151.0 317,151.0 317,151.5 316,151.5 316,150.1 315,150.1 315,153.3 314,153.3 314,147.0 313,147.0 313,135.0 312,135.0 312,128.3 311,128.3 311,128.4 310,128.4 310,127.6 309,127.6 309,126.2 308,126.2 308,126.2 307,126.2 307,126.2 306,126.2 306,127.7 305,127.7 305,131.1 304,131.1 304,129.5 303,129.5 303,128.2 302,128.2 302,126.2 301,126.2 301,127.8 300,127.8 300,126.3 299,126.3 299,126.2 298,126.2 298,125.6 297,125.6 297,126.0 296,126.0 296,125.3 295,125.3 295,125.5 294,125.5 294,125.2 293,125.2 293,125.9 292,125.9 292,125.8 291,125.8 291,125.8 290,125.8 290,125.9 289,125.9 289,126.2 288,126.2 288,125.7 287,125.7 287,125.4 286,125.4 286,125.9 285,125.9 285,126.2 284,126.2 284,126.5 283,126.5 283,126.5 282,126.5 282,125.6 281,125.6 281,125.8 280,125.8 280,126.2 279,126.2 279,126.5 278,126.5 278,126.6 277,126.6 277,125.9 276,125.9 276,125.9 275,125.9 275,126.0 274,126.0 274,126.2 273,126.2 273,126.3 272,126.3 272,126.6 271,126.6 271,126.6 270,126.6 270,126.5 269,126.5 269,126.2 268,126.2 268,125.1 267,125.1 267,125.8 266,125.8 266,126.1 265,126.1 265,126.7 264,126.7 264,126.1 263,126.1 263,126.3 262,126.3 262,126.3 261,126.3 261,125.7 260,125.7 260,125.6 259,125.6 259,125.4 258,125.4 258,125.9 257,125.9 257,125.7 256,125.7 256,125.6 255,125.6 255,125.0 254,125.0 254,126.4 253,126.4 253,126.4 252,126.4 252,126.2 251,126.2 251,126.8 250,126.8 250,126.4 249,126.4 249,125.3 248,125.3 248,125.8 247,125.8 247,125.7 246,125.7 246,125.6 245,125.6 245,126.3 244,126.3 244,125.7 243,125.7 243,126.0 242,126.0 242,125.6 241,125.6 241,126.3 240,126.3 240,126.4 239,126.4 239,126.3 238,126.3 238,126.0 237,126.0 237,126.0 236,126.0 236,126.0 235,126.0 235,126.1 234,126.1 234,126.1 233,126.1 233,125.3 232,125.3 232,125.4 231,125.4 231,125.9 230,125.9 230,125.9 229,125.9 229,124.7 228,124.7 228,123.9 227,123.9 227,124.7 226,124.7 226,125.2 225,125.2 225,125.1 224,125.1 224,126.2 223,126.2 223,126.4 222,126.4 222,125.8 221,125.8 221,126.0 220,126.0 220,126.0 219,126.0 219,126.0 218,126.0 218,125.4 217,125.4 217,125.3 216,125.3 216,126.0 215,126.0 215,126.1 214,126.1 214,126.3 213,126.3 213,125.8 212,125.8 212,126.9 211,126.9 211,126.1 210,126.1 210,125.9 209,125.9 209,125.5 208,125.5 208,125.7 207,125.7 207,125.2 206,125.2 206,125.3 205,125.3 205,125.5 204,125.5 204,125.5 203,125.5 203,126.0 202,126.0 202,125.8 201,125.8 201,125.6 200,125.6 200,124.9 199,124.9 199,125.3 198,125.3 198,125.4 197,125.4 197,125.1 196,125.1 196,125.5 195,125.5 195,125.9 194,125.9 194,125.7 193,125.7 193,125.7 192,125.7 192,125.4 191,125.4 191,124.7 190,124.7 190,125.3 189,125.3 189,126.2 188,126.2 188,125.7 187,125.7 187,125.5 186,125.5 186,126.0 185,126.0 185,125.2 184,125.2 184,126.1 183,126.1 183,127.2 182,127.2 182,127.1 181,127.1 181,126.5 180,126.5 180,126.3 179,126.3 179,126.2 178,126.2 178,125.8 177,125.8 177,126.7 176,126.7 176,126.1 175,126.1 175,126.7 174,126.7 174,126.6 173,126.6 173,126.5 172,126.5 172,126.3 171,126.3 171,126.1 170,126.1 170,126.4 169,126.4 169,126.0 168,126.0 168,125.3 167,125.3 167,125.8 166,125.8 166,126.2 165,126.2 165,126.7 164,126.7 164,126.1 163,126.1 163,125.8 162,125.8 162,125.4 161,125.4 161,126.0 160,126.0 160,126.8 159,126.8 159,127.3 158,127.3 158,127.0 157,127.0 157,126.0 156,126.0 156,125.0 155,125.0 155,125.2 154,125.2 154,126.0 153,126.0 153,127.3 152,127.3 152,127.9 151,127.9 151,127.2 150,127.2 150,125.9 149,125.9 149,124.5 148,124.5 148,125.0 147,125.0 147,126.8 146,126.8 146,128.2 145,128.2 145,128.9 144,128.9 144,127.3 143,127.3 143,125.5 142,125.5 142,123.7 141,123.7 141,123.7 140,123.7 140,125.8 139,125.8 139,127.6 138,127.6 138,130.3 137,130.3 137,129.2 136,129.2 136,125.9 135,125.9 135,123.2 134,123.2 134,122.0 133,122.0 133,123.7 132,123.7 132,129.3 131,129.3 131,131.8 130,131.8 130,132.6 129,132.6 129,134.1 128,134.1 128,134.9 127,134.9 127,144.7 126,144.7 126,148.2 125,148.2 125,153.8 124,153.8 124,148.8 123,148.8 123,153.8 122,153.8 122,153.3 121,153.3 121,151.5 120,151.5 120,138.4 119,138.4 119,134.4 118,134.4 118,135.4 117,135.4 117,130.6 116,130.6 116,131.5 115,131.5 115,129.3 114,129.3 114,128.3 113,128.3 113,125.2 112,125.2 112,125.2 111,125.2 111,125.3 110,125.3 110,125.2 109,125.2 109,125.8 108,125.8 108,125.5 107,125.5 107,125.1 106,125.1 106,124.7 105,124.7 105,125.8 104,125.8 104,125.8 103,125.8 103,125.6 102,125.6 102,125.0 101,125.0 101,125.1 100,125.1 100,124.6 99,124.6 99,124.8 98,124.8 98,124.9 97,124.9 97,125.5 96,125.5 96,125.5 95,125.5 95,126.2 94,126.2 94,125.8 93,125.8 93,125.6 92,125.6 92,126.1 91,126.1 91,126.2 90,126.2 90,126.0 89,126.0 89,125.7 88,125.7 88,126.0 87,126.0 87,126.4 86,126.4 86,125.6 85,125.6 85,125.3 84,125.3 84,125.5 83,125.5 83,125.5 82,125.5 82,125.9 81,125.9 81,126.1 80,126.1 80,126.0 79,126.0Z" fill="#45d7a6"/>
  <path d="M79,215.5 80,215.5 80,215.2 81,215.2 81,215.4 82,215.4 82,214.8 83,214.8 83,214.7 84,214.7 84,215.1 85,215.1 85,215.8 86,215.8 86,215.4 87,215.4 87,216.2 88,216.2 88,216.9 89,216.9 89,215.4 90,215.4 90,215.2 91,215.2 91,214.7 92,214.7 92,214.8 93,214.8 93,214.7 94,214.7 94,214.8 95,214.8 95,215.4 96,215.4 96,215.6 97,215.6 97,215.4 98,215.4 98,215.2 99,215.2 99,215.2 100,215.2 100,215.2 101,215.2 101,215.4 102,215.4 102,215.2 103,215.2 103,215.3 104,215.3 104,214.6 105,214.6 105,215.2 106,215.2 106,215.9 107,215.9 107,215.5 108,215.5 108,214.7 109,214.7 109,215.4 110,215.4 110,215.1 111,215.1 111,213.7 112,213.7 112,214.3 113,214.3 113,211.9 114,211.9 114,211.9 115,211.9 115,211.8 116,211.8 116,212.1 117,212.1 117,210.5 118,210.5 118,208.1 119,208.1 119,204.9 120,204.9 120,203.5 121,203.5 121,203.9 122,203.9 122,196.3 123,196.3 123,200.1 124,200.1 124,202.6 125,202.6 125,203.2 126,203.2 126,204.2 127,204.2 127,208.5 128,208.5 128,210.2 129,210.2 129,218.3 130,218.3 130,212.4 131,212.4 131,208.7 132,208.7 132,210.5 133,210.5 133,214.6 134,214.6 134,218.2 135,218.2 135,217.8 136,217.8 136,214.6 137,214.6 137,211.4 138,211.4 138,211.3 139,211.3 139,214.0 140,214.0 140,216.4 141,216.4 141,217.7 142,217.7 142,215.7 143,215.7 143,213.0 144,213.0 144,212.1 145,212.1 145,214.1 146,214.1 146,216.0 147,216.0 147,216.7 148,216.7 148,215.7 149,215.7 149,213.9 150,213.9 150,213.0 151,213.0 151,213.5 152,213.5 152,215.1 153,215.1 153,215.9 154,215.9 154,216.0 155,216.0 155,215.5 156,215.5 156,214.3 157,214.3 157,213.6 158,213.6 158,214.1 159,214.1 159,214.9 160,214.9 160,215.7 161,215.7 161,215.5 162,215.5 162,214.6 163,214.6 163,214.3 164,214.3 164,214.2 165,214.2 165,215.0 166,215.0 166,214.7 167,214.7 167,215.3 168,215.3 168,215.4 169,215.4 169,214.5 170,214.5 170,215.0 171,215.0 171,215.3 172,215.3 172,214.9 173,214.9 173,215.1 174,215.1 174,215.2 175,215.2 175,214.9 176,214.9 176,214.7 177,214.7 177,214.6 178,214.6 178,214.7 179,214.7 179,214.2 180,214.2 180,214.6 181,214.6 181,214.2 182,214.2 182,214.6 183,214.6 183,214.8 184,214.8 184,214.4 185,214.4 185,215.1 186,215.1 186,215.9 187,215.9 187,216.1 188,216.1 188,214.9 189,214.9 189,215.5 190,215.5 190,215.4 191,215.4 191,215.2 192,215.2 192,214.8 193,214.8 193,214.9 194,214.9 194,215.6 195,215.6 195,215.5 196,215.5 196,215.1 197,215.1 197,214.8 198,214.8 198,214.7 199,214.7 199,215.1 200,215.1 200,215.9 201,215.9 201,215.0 202,215.0 202,215.0 203,215.0 203,214.8 204,214.8 204,214.6 205,214.6 205,215.0 206,215.0 206,215.2 207,215.2 207,214.5 208,214.5 208,214.3 209,214.3 209,215.2 210,215.2 210,215.2 211,215.2 211,215.4 212,215.4 212,215.0 213,215.0 213,214.8 214,214.8 214,215.1 215,215.1 215,214.9 216,214.9 216,214.4 217,214.4 217,214.7 218,214.7 218,215.3 219,215.3 219,214.7 220,214.7 220,215.3 221,215.3 221,215.5 222,215.5 222,214.9 223,214.9 223,214.9 224,214.9 224,215.0 225,215.0 225,215.3 226,215.3 226,215.4 227,215.4 227,214.7 228,214.7 228,214.2 229,214.2 229,215.1 230,215.1 230,215.1 231,215.1 231,215.2 232,215.2 232,215.3 233,215.3 233,215.8 234,215.8 234,214.9 235,214.9 235,215.4 236,215.4 236,214.9 237,214.9 237,215.3 238,215.3 238,215.7 239,215.7 239,214.8 240,214.8 240,215.1 241,215.1 241,214.9 242,214.9 242,214.8 243,214.8 243,214.9 244,214.9 244,214.5 245,214.5 245,214.3 246,214.3 246,215.0 247,215.0 247,215.4 248,215.4 248,214.9 249,214.9 249,214.3 250,214.3 250,215.7 251,215.7 251,215.9 252,215.9 252,215.6 253,215.6 253,214.8 254,214.8 254,214.7 255,214.7 255,215.0 256,215.0 256,214.6 257,214.6 257,215.5 258,215.5 258,215.3 259,215.3 259,215.3 260,215.3 260,214.7 261,214.7 261,214.5 262,214.5 262,214.4 263,214.4 263,214.8 264,214.8 264,214.8 265,214.8 265,214.8 266,214.8 266,215.0 267,215.0 267,215.1 268,215.1 268,215.7 269,215.7 269,215.3 270,215.3 270,214.7 271,214.7 271,214.9 272,214.9 272,215.6 273,215.6 273,215.1 274,215.1 274,215.1 275,215.1 275,214.9 276,214.9 276,215.1 277,215.1 277,215.2 278,215.2 278,214.7 279,214.7 279,214.8 280,214.8 280,215.3 281,215.3 281,215.7 282,215.7 282,215.7 283,215.7 283,215.8 284,215.8 284,215.2 285,215.2 285,215.0 286,215.0 286,215.4 287,215.4 287,214.7 288,214.7 288,214.8 289,214.8 289,214.1 290,214.1 290,214.4 291,214.4 291,214.4 292,214.4 292,214.2 293,214.2 293,214.9 294,214.9 294,214.6 295,214.6 295,214.7 296,214.7 296,214.7 297,214.7 297,214.5 298,214.5 298,214.6 299,214.6 299,214.7 300,214.7 300,214.8 301,214.8 301,212.9 302,212.9 302,210.2 303,210.2 303,214.0 304,214.0 304,209.7 305,209.7 305,212.9 306,212.9 306,213.1 307,213.1 307,214.4 308,214.4 308,213.9 309,213.9 309,212.2 310,212.2 310,211.5 311,211.5 311,212.3 312,212.3 312,204.1 313,204.1 313,191.3 314,191.3 314,191.0 315,191.0 315,189.0 316,189.0 316,188.5 317,188.5 317,189.4 318,189.4 318,187.8 319,187.8 319,185.9 320,185.9 320,185.9 321,185.9 321,188.3 322,188.3 322,183.8 323,183.8 323,184.9 324,184.9 324,182.8 325,182.8 325,179.0 326,179.0 326,182.6 327,182.6 327,182.7 328,182.7 328,181.8 329,181.8 329,182.5 330,182.5 330,180.3 331,180.3 331,184.2 332,184.2 332,185.0 333,185.0 333,183.5 334,183.5 334,186.5 335,186.5 335,187.0 336,187.0 336,181.0 337,181.0 337,181.7 338,181.7 338,179.6 339,179.6 339,181.1 340,181.1 340,182.4 341,182.4 341,181.7 342,181.7 342,183.3 343,183.3 343,183.3 344,183.3 344,177.4 345,177.4 345,182.1 346,182.1 346,181.0 347,181.0 347,178.9 348,178.9 348,183.9 349,183.9 349,181.2 350,181.2 350,180.7 351,180.7 351,179.8 352,179.8 352,181.8 353,181.8 353,179.7 354,179.7 354,181.7 355,181.7 355,182.6 356,182.6 356,182.7 357,182.7 357,178.7 358,178.7 358,181.8 359,181.8 359,183.3 360,183.3 360,181.5 361,181.5 361,186.7 362,186.7 362,179.8 363,179.8 363,182.5 364,182.5 364,183.2 365,183.2 365,177.6 366,177.6 366,179.4 367,179.4 367,177.9 368,177.9 368,183.8 369,183.8 369,185.6 370,185.6 370,181.5 371,181.5 371,181.0 372,181.0 372,183.3 373,183.3 373,185.1 374,185.1 374,180.6 375,180.6 375,186.3 376,186.3 376,182.2 377,182.2 377,182.3 378,182.3 378,182.3 379,182.3 379,175.6 380,175.6 380,184.5 381,184.5 381,182.5 382,182.5 382,178.1 383,178.1 383,184.3 384,184.3 384,181.4 385,181.4 385,184.2 386,184.2 386,181.6 387,181.6 387,181.2 388,181.2 388,181.7 389,181.7 389,176.8 390,176.8 390,182.6 391,182.6 391,185.3 392,185.3 392,187.0 393,187.0 393,180.1 394,180.1 394,181.7 395,181.7 395,190.0 396,190.0 396,183.1 397,183.1 397,180.7 398,180.7 398,181.3 399,181.3 399,186.9 400,186.9 400,183.9 401,183.9 401,184.1 402,184.1 402,180.2 403,180.2 403,181.2 404,181.2 404,175.7 405,175.7 405,183.2 406,183.2 406,175.1 407,175.1 407,187.0 408,187.0 408,180.3 409,180.3 409,183.5 410,183.5 410,182.2 411,182.2 411,182.0 412,182.0 412,177.6 413,177.6 413,179.6 414,179.6 414,183.0 415,183.0 415,176.9 416,176.9 416,183.5 417,183.5 417,183.7 418,183.7 418,183.0 419,183.0 419,178.6 420,178.6 420,183.3 421,183.3 421,182.4 422,182.4 422,180.9 423,180.9 423,181.5 424,181.5 424,182.8 425,182.8 425,181.4 426,181.4 426,180.9 427,180.9 427,183.5 428,183.5 428,185.3 429,185.3 429,179.3 430,179.3 430,183.7 431,183.7 431,180.2 432,180.2 432,178.4 433,178.4 433,180.4 434,180.4 434,181.9 435,181.9 435,184.8 436,184.8 436,180.2 437,180.2 437,180.0 438,180.0 438,178.5 439,178.5 439,182.8 440,182.8 440,182.5 441,182.5 441,182.3 442,182.3 442,185.5 443,185.5 443,181.6 444,181.6 444,178.6 445,178.6 445,180.5 446,180.5 446,182.2 447,182.2 447,186.0 448,186.0 448,186.7 449,186.7 449,184.5 450,184.5 450,186.2 451,186.2 451,181.4 452,181.4 452,177.7 453,177.7 453,181.8 454,181.8 454,182.3 455,182.3 455,182.2 456,182.2 456,182.7 457,182.7 457,179.9 458,179.9 458,183.7 459,183.7 459,184.2 460,184.2 460,184.8 461,184.8 461,181.5 462,181.5 462,183.1 463,183.1 463,182.3 464,182.3 464,185.0 465,185.0 465,183.2 466,183.2 466,184.0 467,184.0 467,183.1 468,183.1 468,185.5 469,185.5 469,182.8 470,182.8 470,183.5 471,183.5 471,179.7 472,179.7 472,182.0 473,182.0 473,180.9 474,180.9 474,185.0 475,185.0 475,183.1 476,183.1 476,181.3 477,181.3 477,181.2 478,181.2 478,181.7 479,181.7 479,181.7 480,181.7 480,179.3 481,179.3 481,183.1 482,183.1 482,182.7 483,182.7 483,182.6 484,182.6 484,181.9 485,181.9 485,180.5 486,180.5 486,180.9 487,180.9 487,181.8 488,181.8 488,180.3 489,180.3 489,182.8 490,182.8 490,183.1 491,183.1 491,181.9 492,181.9 492,184.6 493,184.6 493,184.7 494,184.7 494,182.1 495,182.1 495,184.6 496,184.6 496,181.4 497,181.4 497,184.5 498,184.5 498,182.9 499,182.9 499,182.2 500,182.2 500,182.8 501,182.8 501,181.9 502,181.9 502,182.7 503,182.7 503,183.7 504,183.7 504,179.5 505,179.5 505,184.7 506,184.7 506,176.4 507,176.4 507,187.8 508,187.8 508,177.5 509,177.5 509,184.8 510,184.8 510,183.0 511,183.0 511,183.8 512,183.8 512,184.9 513,184.9 513,181.3 514,181.3 514,180.5 515,180.5 515,182.9 516,182.9 516,182.5 517,182.5 517,183.0 518,183.0 518,176.9 519,176.9 519,180.7 520,180.7 520,181.9 521,181.9 521,179.6 522,179.6 522,181.2 523,181.2 523,183.5 524,183.5 524,182.1 525,182.1 525,181.0 526,181.0 526,182.1 527,182.1 527,178.6 528,178.6 528,182.4 529,182.4 529,182.1 530,182.1 530,180.3 531,180.3 531,184.5 532,184.5 532,184.9 533,184.9 533,181.0 534,181.0 534,182.2 535,182.2 535,179.6 536,179.6 536,185.6 537,185.6 537,175.1 538,175.1 538,184.6 539,184.6 539,180.9 540,180.9 540,182.4 541,182.4 541,184.3 542,184.3 542,180.9 543,180.9 543,181.2 544,181.2 544,181.9 545,181.9 545,183.6 546,183.6 546,181.2 547,181.2 547,182.3 548,182.3 548,177.4 549,177.4 549,186.0 550,186.0 550,181.7 551,181.7 551,178.0 552,178.0 552,181.1 553,181.1 553,177.0 554,177.0 554,182.7 555,182.7 555,179.7 556,179.7 556,183.4 557,183.4 557,180.7 558,180.7 558,182.3 559,182.3 559,182.7 560,182.7 560,179.6 561,179.6 561,183.3 562,183.3 562,185.9 563,185.9 563,181.8 564,181.8 564,184.3 565,184.3 565,182.0 566,182.0 566,182.0 567,182.0 567,184.7 568,184.7 568,180.2 569,180.2 569,182.3 570,182.3 570,181.4 571,181.4 571,184.8 572,184.8 572,176.3 573,176.3 573,184.0 574,184.0 574,184.3 575,184.3 575,185.2 576,185.2 576,184.2 577,184.2 577,178.5 578,178.5 578,184.2 579,184.2 579,181.4 580,181.4 580,183.0 581,183.0 581,182.8 582,182.8 582,183.6 583,183.6 583,182.5 584,182.5 584,180.2 585,180.2 585,184.6 586,184.6 586,182.4 587,182.4 587,186.0 588,186.0 588,185.8 589,185.8 589,179.5 590,179.5 590,183.4 591,183.4 591,182.5 592,182.5 592,186.7 593,186.7 593,187.8 594,187.8 594,178.8 595,178.8 595,179.7 596,179.7 596,181.0 597,181.0 597,182.4 598,182.4 598,179.5 599,179.5 599,183.6 600,183.6 600,181.4 601,181.4 601,184.3 602,184.3 602,183.5 603,183.5 603,183.0 604,183.0 604,185.4 605,185.4 605,180.1 606,180.1 606,185.0 607,185.0 607,182.4 608,182.4 608,180.2 609,180.2 609,177.3 610,177.3 610,184.0 611,184.0 611,177.4 612,177.4 612,182.6 613,182.6 613,181.6 614,181.6 614,185.4 615,185.4 615,181.6 616,181.6 616,179.6 617,179.6 617,182.1 618,182.1 618,182.2 619,182.2 619,178.7 620,178.7 620,182.5 621,182.5 621,187.6 622,187.6 622,174.4 623,174.4 623,178.7 624,178.7 624,182.7 625,182.7 625,186.6 626,186.6 626,183.3 627,183.3 627,185.0 628,185.0 628,179.2 629,179.2 629,183.8 630,183.8 630,183.0 631,183.0 631,180.0 632,180.0 632,181.7 633,181.7 633,185.0 634,185.0 634,182.4 635,182.4 635,179.3 636,179.3 636,182.0 637,182.0 637,183.5 638,183.5 638,181.4 639,181.4 639,182.0 640,182.0 640,182.7 641,182.7 641,182.9 642,182.9 642,182.3 643,182.3 643,182.9 644,182.9 644,190.9 645,190.9 645,179.9 646,179.9 646,183.3 647,183.3 647,183.5 648,183.5 648,178.9 649,178.9 649,183.8 650,183.8 650,182.8 651,182.8 651,183.3 652,183.3 652,180.7 653,180.7 653,180.3 654,180.3 654,179.4 655,179.4 655,184.0 656,184.0 656,183.1 657,183.1 657,182.0 658,182.0 658,183.0 659,183.0 659,181.9 660,181.9 660,179.8 661,179.8 661,184.6 662,184.6 662,182.8 663,182.8 663,182.5 664,182.5 664,184.0 665,184.0 665,186.0 666,186.0 666,182.8 667,182.8 667,178.9 668,178.9 668,181.8 669,181.8 669,184.0 670,184.0 670,183.1 671,183.1 671,182.4 672,182.4 672,182.2 673,182.2 673,182.3 674,182.3 674,183.6 675,183.6 675,181.2 676,181.2 676,176.1 677,176.1 677,183.5 678,183.5 678,181.4 679,181.4 679,179.3 680,179.3 680,184.2 681,184.2 681,181.4 682,181.4 682,182.0 683,182.0 683,179.9 684,179.9 684,181.9 685,181.9 685,181.8 686,181.8 686,183.5 687,183.5 687,179.9 688,179.9 688,182.8 689,182.8 689,179.4 690,179.4 690,181.3 691,181.3 691,181.8 692,181.8 692,184.4 693,184.4 693,181.6 694,181.6 694,182.9 695,182.9 695,178.1 696,178.1 696,184.0 697,184.0 697,180.8 698,180.8 698,181.1 699,181.1 699,182.4 700,182.4 700,184.4 701,184.4 701,183.3 702,183.3 702,181.4 703,181.4 703,182.6 704,182.6 704,181.2 705,181.2 705,183.1 706,183.1 706,182.3 707,182.3 707,180.8 708,180.8 708,180.7 709,180.7 709,182.1 710,182.1 710,183.1 711,183.1 711,176.4 712,176.4 712,183.1 713,183.1 713,182.8 714,182.8 714,182.5 715,182.5 715,181.0 716,181.0 716,180.3 717,180.3 717,177.3 718,177.3 718,185.0 719,185.0 719,181.0 720,181.0 720,184.0 721,184.0 721,182.1 722,182.1 722,180.5 723,180.5 723,183.4 724,183.4 724,181.6 725,181.6 725,182.2 726,182.2 726,183.4 727,183.4 727,187.3 728,187.3 728,184.9 729,184.9 729,182.7 730,182.7 730,180.0 731,180.0 731,181.7 732,181.7 732,186.8 733,186.8 733,181.0 734,181.0 734,180.3 735,180.3 735,182.2 736,182.2 736,181.8 737,181.8 737,175.6 738,175.6 738,178.4 739,178.4 739,184.1 740,184.1 740,182.3 741,182.3 741,184.6 742,184.6 742,178.9 743,178.9 743,182.2 744,182.2 744,178.8 745,178.8 745,183.3 746,183.3 746,181.3 747,181.3 747,181.1 748,181.1 748,180.2 749,180.2 749,183.8 750,183.8 750,182.6 751,182.6 751,183.5 752,183.5 752,176.8 753,176.8 753,182.2 754,182.2 754,181.5 755,181.5 755,181.1 756,181.1 756,185.4 757,185.4 757,178.8 758,178.8 758,180.8 759,180.8 759,177.2 760,177.2 760,180.9 761,180.9 761,182.8 762,182.8 762,183.7 763,183.7 763,181.7 764,181.7 764,183.2 765,183.2 765,189.3 766,189.3 766,184.7 767,184.7 767,176.5 768,176.5 768,184.8 769,184.8 769,185.0 770,185.0 770,177.6 771,177.6 771,181.8 772,181.8 772,189.4 773,189.4 773,185.6 774,185.6 774,177.5 775,177.5 775,185.5 776,185.5 776,181.4 777,181.4 777,182.8 778,182.8 778,179.1 779,179.1 779,178.9 780,178.9 780,180.4 781,180.4 781,178.3 782,178.3 782,185.4 783,185.4 783,181.0 784,181.0 784,182.1 785,182.1 785,183.2 786,183.2 786,182.6 787,182.6 787,179.0 788,179.0 788,183.2 789,183.2 789,182.4 790,182.4 790,182.2 791,182.2 791,182.5 792,182.5 792,184.8 793,184.8 793,180.8 794,180.8 794,183.9 795,183.9 795,183.7 796,183.7 796,175.3 797,175.3 797,181.5 798,181.5 798,179.7 799,179.7 799,181.1 800,181.1 800,183.3 801,183.3 801,181.1 802,181.1 802,183.7 803,183.7 803,179.2 804,179.2 804,180.9 805,180.9 805,182.7 806,182.7 806,181.8 807,181.8 807,180.6 808,180.6 808,181.4 809,181.4 809,184.2 810,184.2 810,179.5 811,179.5 811,186.0 812,186.0 812,177.7 813,177.7 813,176.3 814,176.3 814,180.5 815,180.5 815,183.7 816,183.7 816,180.7 817,180.7 817,185.6 818,185.6 818,178.0 819,178.0 819,180.8 820,180.8 820,182.7 821,182.7 821,184.1 822,184.1 822,182.5 823,182.5 823,179.0 824,179.0 824,180.3 825,180.3 825,184.3 826,184.3 826,183.8 827,183.8 827,178.0 828,178.0 828,182.0 829,182.0 829,177.9 830,177.9 830,181.7 831,181.7 831,176.5 832,176.5 832,183.9 833,183.9 833,187.9 834,187.9 834,182.0 835,182.0 835,181.1 836,181.1 836,182.3 837,182.3 837,182.3 838,182.3 838,187.4 839,187.4 839,181.6 840,181.6 840,181.6 841,181.6 841,183.4 842,183.4 842,180.7 843,180.7 843,183.1 844,183.1 844,181.3 845,181.3 845,179.3 846,179.3 846,185.0 847,185.0 847,178.6 848,178.6 848,181.3 849,181.3 849,179.9 850,179.9 850,182.5 851,182.5 851,182.7 852,182.7 852,173.1 853,173.1 853,190.7 854,190.7 854,196.3 855,196.3 855,194.4 856,194.4 856,194.1 857,194.1 857,197.3 858,197.3 858,199.1 859,199.1 859,201.1 860,201.1 860,200.0 861,200.0 861,206.4 862,206.4 862,205.5 863,205.5 863,208.8 864,208.8 864,207.6 865,207.6 865,210.5 866,210.5 866,210.7 867,210.7 867,211.2 868,211.2 868,210.7 869,210.7 869,212.3 870,212.3 870,211.9 871,211.9 871,213.3 872,213.3 872,212.4 873,212.4 873,212.9 874,212.9 874,213.0 875,213.0 875,213.3 876,213.3 876,213.9 877,213.9 877,213.6 878,213.6 878,214.2 879,214.2 879,214.2 880,214.2 880,214.4 881,214.4 881,214.3 882,214.3 882,214.1 883,214.1 883,214.7 884,214.7 884,214.8 885,214.8 885,214.1 886,214.1 886,214.9 887,214.9 887,214.8 888,214.8 888,214.4 889,214.4 889,214.3 890,214.3 890,214.8 891,214.8 891,215.2 892,215.2 892,214.5 893,214.5 893,215.3 894,215.3 894,215.0 895,215.0 895,215.1 896,215.1 896,215.2 897,215.2 897,215.0 898,215.0 898,215.4 899,215.4 899,214.9 900,214.9 900,215.1 901,215.1 901,215.6 902,215.6 902,215.4 903,215.4 903,215.3 904,215.3 904,215.0 905,215.0 905,215.0 906,215.0 906,215.3 907,215.3 907,215.1 908,215.1 908,214.3 909,214.3 909,214.7 910,214.7 910,214.8 911,214.8 911,215.1 912,215.1 912,215.1 913,215.1 913,215.8 914,215.8 914,214.9 915,214.9 915,214.5 916,214.5 916,215.1 917,215.1 917,214.6 918,214.6 918,215.0 919,215.0 919,215.0 920,215.0 920,214.1 921,214.1 921,214.9 922,214.9 922,215.6 923,215.6 923,215.4 924,215.4 924,214.6 925,214.6 925,215.2 926,215.2 926,214.6 927,214.6 927,214.8 928,214.8 928,215.1 929,215.1 929,214.7 930,214.7 930,214.1 931,214.1 931,214.5 932,214.5 932,214.7 933,214.7 933,214.5 934,214.5 934,214.4 935,214.4 935,215.0 936,215.0 936,215.0 937,215.0 937,214.8 938,214.8 938,214.6 939,214.6 939,214.9 940,214.9 940,215.0 941,215.0 941,214.9 942,214.9 942,214.4 943,214.4 943,214.5 944,214.5 944,214.5 945,214.5 945,214.8 946,214.8 946,215.4 947,215.4 947,215.6 948,215.6 948,215.6 949,215.6 949,215.4 950,215.4 950,215.1 951,215.1 951,215.2 952,215.2 952,214.9 953,214.9 953,214.8 954,214.8 954,214.5 955,214.5 955,214.8 956,214.8 956,214.9 957,214.9 957,215.7 958,215.7 958,215.6 959,215.6 959,215.2 960,215.2 960,215.4 961,215.4 961,215.0 962,215.0 962,215.5 963,215.5 963,215.6 964,215.6 964,216.6 965,216.6 965,215.3 966,215.3 966,215.1 967,215.1 967,215.0 968,215.0 968,215.2 969,215.2 969,215.4 970,215.4 970,214.8 971,214.8 971,214.6 972,214.6 972,214.9 973,214.9 973,215.4 974,215.4 974,214.7 975,214.7 975,214.2 976,214.2 976,215.1 977,215.1 977,215.4 978,215.4 978,215.7 979,215.7 979,214.9 980,214.9 980,214.9 981,214.9 981,215.1 982,215.1 982,215.2 983,215.2 983,215.1 984,215.1 984,215.0 985,215.0 985,215.5 986,215.5 986,215.1 987,215.1 987,214.8 988,214.8 988,214.7 989,214.7 989,214.6 990,214.6 990,214.9 991,214.9 991,214.9 992,214.9 992,214.8 993,214.8 993,215.5 994,215.5 994,215.4 995,215.4 995,215.1 996,215.1 996,215.6 997,215.6 997,215.1 998,215.1 998,215.0 999,215.0 999,215.0 1000,215.0 1000,214.8 1001,214.8 1001,214.7 1002,214.7 1002,214.9 1003,214.9 1003,214.3 1004,214.3 1004,214.5 1005,214.5 1005,214.9 1006,214.9 1006,215.1 1007,215.1 1007,215.2 1008,215.2 1008,216.1 1009,216.1 1009,215.8 1010,215.8 1010,215.4 1011,215.4 1011,215.1 1012,215.1 1012,215.1 1013,215.1 1013,215.2 1014,215.2 1014,215.0 1015,215.0 1015,215.7 1016,215.7 1016,214.9 1017,214.9 1017,215.2 1018,215.2 1018,215.3 1019,215.3 1019,214.7 1020,214.7 1020,215.1 1021,215.1 1021,215.3 1022,215.3 1022,214.9 1023,214.9 1023,215.9 1024,215.9 1024,215.8 1025,215.8 1025,215.3 1026,215.3 1026,214.9 1027,214.9 1027,214.7 1028,214.7 1028,214.9 1029,214.9 1029,215.0 1030,215.0 1030,214.4 1031,214.4 1031,214.3 1032,214.3 1032,214.3 1033,214.3 1033,214.5 1034,214.5 1034,214.6 1035,214.6 1035,214.5 1036,214.5 1036,215.0 1037,215.0 1037,215.4 1038,215.4 1038,215.3 1039,215.3 1039,214.2 1040,214.2 1040,214.5 1041,214.5 1041,215.0 1042,215.0 1042,215.0 1043,215.0 1043,215.1 1044,215.1 1044,215.1 1045,215.1 1045,214.4 1046,214.4 1046,213.6 1047,213.6 1047,214.6 1048,214.6 1048,214.6 1049,214.6 1049,215.0 1050,215.0 1050,214.9 1051,214.9 1051,214.9 1052,214.9 1052,215.5 1053,215.5 1053,214.8 1054,214.8 1054,214.9 1055,214.9 1055,214.5 1056,214.5 1056,214.8 1057,214.8 1057,215.1 1058,215.1 1058,215.3 1059,215.3 1059,215.2 1060,215.2 1060,214.5 1061,214.5 1061,214.9 1062,214.9 1062,215.8 1061,215.8 1061,215.4 1060,215.4 1060,216.1 1059,216.1 1059,216.2 1058,216.2 1058,216.0 1057,216.0 1057,215.7 1056,215.7 1056,215.4 1055,215.4 1055,215.8 1054,215.8 1054,215.7 1053,215.7 1053,216.4 1052,216.4 1052,215.8 1051,215.8 1051,215.8 1050,215.8 1050,215.9 1049,215.9 1049,215.5 1048,215.5 1048,215.5 1047,215.5 1047,214.5 1046,214.5 1046,215.3 1045,215.3 1045,216.0 1044,216.0 1044,216.0 1043,216.0 1043,215.9 1042,215.9 1042,215.9 1041,215.9 1041,215.4 1040,215.4 1040,215.1 1039,215.1 1039,216.2 1038,216.2 1038,216.3 1037,216.3 1037,215.9 1036,215.9 1036,215.4 1035,215.4 1035,215.5 1034,215.5 1034,215.4 1033,215.4 1033,215.2 1032,215.2 1032,215.2 1031,215.2 1031,215.3 1030,215.3 1030,215.9 1029,215.9 1029,215.8 1028,215.8 1028,215.6 1027,215.6 1027,215.8 1026,215.8 1026,216.2 1025,216.2 1025,216.7 1024,216.7 1024,216.8 1023,216.8 1023,215.8 1022,215.8 1022,216.2 1021,216.2 1021,216.0 1020,216.0 1020,215.6 1019,215.6 1019,216.2 1018,216.2 1018,216.1 1017,216.1 1017,215.8 1016,215.8 1016,216.6 1015,216.6 1015,215.9 1014,215.9 1014,216.1 1013,216.1 1013,216.0 1012,216.0 1012,216.0 1011,216.0 1011,216.3 1010,216.3 1010,216.7 1009,216.7 1009,217.0 1008,217.0 1008,216.1 1007,216.1 1007,216.0 1006,216.0 1006,215.8 1005,215.8 1005,215.4 1004,215.4 1004,215.2 1003,215.2 1003,215.8 1002,215.8 1002,215.6 1001,215.6 1001,215.7 1000,215.7 1000,215.9 999,215.9 999,215.9 998,215.9 998,216.0 997,216.0 997,216.5 996,216.5 996,216.0 995,216.0 995,216.3 994,216.3 994,216.4 993,216.4 993,215.7 992,215.7 992,215.8 991,215.8 991,215.8 990,215.8 990,215.5 989,215.5 989,215.6 988,215.6 988,215.7 987,215.7 987,216.0 986,216.0 986,216.4 985,216.4 985,215.9 984,215.9 984,216.0 983,216.0 983,216.1 982,216.1 982,216.0 981,216.0 981,215.8 980,215.8 980,215.8 979,215.8 979,216.6 978,216.6 978,216.3 977,216.3 977,216.0 976,216.0 976,215.1 975,215.1 975,215.6 974,215.6 974,216.3 973,216.3 973,215.8 972,215.8 972,215.5 971,215.5 971,215.7 970,215.7 970,216.3 969,216.3 969,216.1 968,216.1 968,215.9 967,215.9 967,216.0 966,216.0 966,216.2 965,216.2 965,217.5 964,217.5 964,216.5 963,216.5 963,216.4 962,216.4 962,215.9 961,215.9 961,216.3 960,216.3 960,216.1 959,216.1 959,216.5 958,216.5 958,216.6 957,216.6 957,215.8 956,215.8 956,215.7 955,215.7 955,215.4 954,215.4 954,215.7 953,215.7 953,215.8 952,215.8 952,216.1 951,216.1 951,216.0 950,216.0 950,216.3 949,216.3 949,216.5 948,216.5 948,216.5 947,216.5 947,216.3 946,216.3 946,215.7 945,215.7 945,215.4 944,215.4 944,215.4 943,215.4 943,215.3 942,215.3 942,215.8 941,215.8 941,215.9 940,215.9 940,215.8 939,215.8 939,215.5 938,215.5 938,215.7 937,215.7 937,215.9 936,215.9 936,215.9 935,215.9 935,215.3 934,215.3 934,215.4 933,215.4 933,215.6 932,215.6 932,215.4 931,215.4 931,215.0 930,215.0 930,215.6 929,215.6 929,216.0 928,216.0 928,215.7 927,215.7 927,215.5 926,215.5 926,216.1 925,216.1 925,215.5 924,215.5 924,216.3 923,216.3 923,216.5 922,216.5 922,215.8 921,215.8 921,215.0 920,215.0 920,215.9 919,215.9 919,215.9 918,215.9 918,215.5 917,215.5 917,216.0 916,216.0 916,215.4 915,215.4 915,215.8 914,215.8 914,216.7 913,216.7 913,216.0 912,216.0 912,216.0 911,216.0 911,215.7 910,215.7 910,215.6 909,215.6 909,215.2 908,215.2 908,216.0 907,216.0 907,216.2 906,216.2 906,215.9 905,215.9 905,215.9 904,215.9 904,216.2 903,216.2 903,216.3 902,216.3 902,216.5 901,216.5 901,216.0 900,216.0 900,215.8 899,215.8 899,216.3 898,216.3 898,215.9 897,215.9 897,216.1 896,216.1 896,216.0 895,216.0 895,215.9 894,215.9 894,216.2 893,216.2 893,215.4 892,215.4 892,216.1 891,216.1 891,216.6 890,216.6 890,216.3 889,216.3 889,216.6 888,216.6 888,216.6 887,216.6 887,216.9 886,216.9 886,216.2 885,216.2 885,216.6 884,216.6 884,216.6 883,216.6 883,216.1 882,216.1 882,216.1 881,216.1 881,216.1 880,216.1 880,216.0 879,216.0 879,216.5 878,216.5 878,215.9 877,215.9 877,216.2 876,216.2 876,216.0 875,216.0 875,216.1 874,216.1 874,216.3 873,216.3 873,216.8 872,216.8 872,217.8 871,217.8 871,217.9 870,217.9 870,218.0 869,218.0 869,217.6 868,217.6 868,219.0 867,219.0 867,219.1 866,219.1 866,220.4 865,220.4 865,221.6 864,221.6 864,221.4 863,221.4 863,220.9 862,220.9 862,222.7 861,222.7 861,224.6 860,224.6 860,224.3 859,224.3 859,227.0 858,227.0 858,233.3 857,233.3 857,230.8 856,230.8 856,233.1 855,233.1 855,240.5 854,240.5 854,237.4 853,237.4 853,258.0 852,258.0 852,250.2 851,250.2 851,253.6 850,253.6 850,251.3 849,251.3 849,248.6 848,248.6 848,249.4 847,249.4 847,247.9 846,247.9 846,251.4 845,251.4 845,247.8 844,247.8 844,249.6 843,249.6 843,251.3 842,251.3 842,248.6 841,248.6 841,247.4 840,247.4 840,251.3 839,251.3 839,248.9 838,248.9 838,249.1 837,249.1 837,248.2 836,248.2 836,248.5 835,248.5 835,249.3 834,249.3 834,251.8 833,251.8 833,250.2 832,250.2 832,251.5 831,251.5 831,249.1 830,249.1 830,255.0 829,255.0 829,247.4 828,247.4 828,249.2 827,249.2 827,248.3 826,248.3 826,246.2 825,246.2 825,244.9 824,244.9 824,250.7 823,250.7 823,247.7 822,247.7 822,248.4 821,248.4 821,250.6 820,250.6 820,248.7 819,248.7 819,244.3 818,244.3 818,247.0 817,247.0 817,250.6 816,250.6 816,252.3 815,252.3 815,248.8 814,248.8 814,251.2 813,251.2 813,245.9 812,245.9 812,250.7 811,250.7 811,248.1 810,248.1 810,243.9 809,243.9 809,248.5 808,248.5 808,246.8 807,246.8 807,249.4 806,249.4 806,255.8 805,255.8 805,247.1 804,247.1 804,245.7 803,245.7 803,251.0 802,251.0 802,247.9 801,247.9 801,250.3 800,250.3 800,252.8 799,252.8 799,249.5 798,249.5 798,246.6 797,246.6 797,248.1 796,248.1 796,248.3 795,248.3 795,244.5 794,244.5 794,250.3 793,250.3 793,246.0 792,246.0 792,253.0 791,253.0 791,251.0 790,251.0 790,253.1 789,253.1 789,249.4 788,249.4 788,249.3 787,249.3 787,250.5 786,250.5 786,249.5 785,249.5 785,249.7 784,249.7 784,252.2 783,252.2 783,249.6 782,249.6 782,247.6 781,247.6 781,249.9 780,249.9 780,248.1 779,248.1 779,252.2 778,252.2 778,248.3 777,248.3 777,253.1 776,253.1 776,251.3 775,251.3 775,250.0 774,250.0 774,248.2 773,248.2 773,252.0 772,252.0 772,246.4 771,246.4 771,243.0 770,243.0 770,248.0 769,248.0 769,248.7 768,248.7 768,246.9 767,246.9 767,246.2 766,246.2 766,248.1 765,248.1 765,250.0 764,250.0 764,247.6 763,247.6 763,248.7 762,248.7 762,247.9 761,247.9 761,254.0 760,254.0 760,244.6 759,244.6 759,250.0 758,250.0 758,252.1 757,252.1 757,246.7 756,246.7 756,252.6 755,252.6 755,248.3 754,248.3 754,248.0 753,248.0 753,248.7 752,248.7 752,246.0 751,246.0 751,251.1 750,251.1 750,247.6 749,247.6 749,248.8 748,248.8 748,249.9 747,249.9 747,249.3 746,249.3 746,255.9 745,255.9 745,246.6 744,246.6 744,247.4 743,247.4 743,248.4 742,248.4 742,246.9 741,246.9 741,248.6 740,248.6 740,249.1 739,249.1 739,245.8 738,245.8 738,246.3 737,246.3 737,253.7 736,253.7 736,249.7 735,249.7 735,252.7 734,252.7 734,246.6 733,246.6 733,248.7 732,248.7 732,247.8 731,247.8 731,247.1 730,247.1 730,248.1 729,248.1 729,251.3 728,251.3 728,248.5 727,248.5 727,246.5 726,246.5 726,254.3 725,254.3 725,247.1 724,247.1 724,248.1 723,248.1 723,246.7 722,246.7 722,248.1 721,248.1 721,247.7 720,247.7 720,252.1 719,252.1 719,249.3 718,249.3 718,247.6 717,247.6 717,251.2 716,251.2 716,248.3 715,248.3 715,248.1 714,248.1 714,245.7 713,245.7 713,250.7 712,250.7 712,247.3 711,247.3 711,248.8 710,248.8 710,248.8 709,248.8 709,250.3 708,250.3 708,249.5 707,249.5 707,247.7 706,247.7 706,249.0 705,249.0 705,249.8 704,249.8 704,248.0 703,248.0 703,249.1 702,249.1 702,252.6 701,252.6 701,250.0 700,250.0 700,254.2 699,254.2 699,251.7 698,251.7 698,248.8 697,248.8 697,245.3 696,245.3 696,249.4 695,249.4 695,248.2 694,248.2 694,244.8 693,244.8 693,247.5 692,247.5 692,248.9 691,248.9 691,246.9 690,246.9 690,246.9 689,246.9 689,249.8 688,249.8 688,246.7 687,246.7 687,249.4 686,249.4 686,250.5 685,250.5 685,248.0 684,248.0 684,249.2 683,249.2 683,248.9 682,248.9 682,248.1 681,248.1 681,247.0 680,247.0 680,247.8 679,247.8 679,246.0 678,246.0 678,248.5 677,248.5 677,246.9 676,246.9 676,246.4 675,246.4 675,256.1 674,256.1 674,247.9 673,247.9 673,247.8 672,247.8 672,251.8 671,251.8 671,247.8 670,247.8 670,249.0 669,249.0 669,249.9 668,249.9 668,251.6 667,251.6 667,249.5 666,249.5 666,252.0 665,252.0 665,253.6 664,253.6 664,251.3 663,251.3 663,248.0 662,248.0 662,248.4 661,248.4 661,249.9 660,249.9 660,249.2 659,249.2 659,247.1 658,247.1 658,249.3 657,249.3 657,247.0 656,247.0 656,248.5 655,248.5 655,248.9 654,248.9 654,253.6 653,253.6 653,252.4 652,252.4 652,257.3 651,257.3 651,250.7 650,250.7 650,251.1 649,251.1 649,248.8 648,248.8 648,248.2 647,248.2 647,250.0 646,250.0 646,245.9 645,245.9 645,248.1 644,248.1 644,248.8 643,248.8 643,253.2 642,253.2 642,247.8 641,247.8 641,249.1 640,249.1 640,251.3 639,251.3 639,249.4 638,249.4 638,249.9 637,249.9 637,251.0 636,251.0 636,243.9 635,243.9 635,244.6 634,244.6 634,254.4 633,254.4 633,248.9 632,248.9 632,246.0 631,246.0 631,245.9 630,245.9 630,247.1 629,247.1 629,248.0 628,248.0 628,249.6 627,249.6 627,249.0 626,249.0 626,246.5 625,246.5 625,246.9 624,246.9 624,248.1 623,248.1 623,249.3 622,249.3 622,247.4 621,247.4 621,249.1 620,249.1 620,249.2 619,249.2 619,247.1 618,247.1 618,251.1 617,251.1 617,246.2 616,246.2 616,249.3 615,249.3 615,247.9 614,247.9 614,246.5 613,246.5 613,246.5 612,246.5 612,249.4 611,249.4 611,249.7 610,249.7 610,248.5 609,248.5 609,248.4 608,248.4 608,250.1 607,250.1 607,249.5 606,249.5 606,249.4 605,249.4 605,248.7 604,248.7 604,248.9 603,248.9 603,247.7 602,247.7 602,251.0 601,251.0 601,247.0 600,247.0 600,247.9 599,247.9 599,247.7 598,247.7 598,247.6 597,247.6 597,247.2 596,247.2 596,248.8 595,248.8 595,245.2 594,245.2 594,254.4 593,254.4 593,244.3 592,244.3 592,247.0 591,247.0 591,249.4 590,249.4 590,249.5 589,249.5 589,245.7 588,245.7 588,247.5 587,247.5 587,241.9 586,241.9 586,253.2 585,253.2 585,248.7 584,248.7 584,247.0 583,247.0 583,245.6 582,245.6 582,247.2 581,247.2 581,249.0 580,249.0 580,248.1 579,248.1 579,248.9 578,248.9 578,251.0 577,251.0 577,247.8 576,247.8 576,254.3 575,254.3 575,247.2 574,247.2 574,250.7 573,250.7 573,246.7 572,246.7 572,248.3 571,248.3 571,248.3 570,248.3 570,250.3 569,250.3 569,243.2 568,243.2 568,251.1 567,251.1 567,245.4 566,245.4 566,252.1 565,252.1 565,246.8 564,246.8 564,245.8 563,245.8 563,249.8 562,249.8 562,248.8 561,248.8 561,250.1 560,250.1 560,251.5 559,251.5 559,249.2 558,249.2 558,247.8 557,247.8 557,245.9 556,245.9 556,250.7 555,250.7 555,248.5 554,248.5 554,249.4 553,249.4 553,248.8 552,248.8 552,251.2 551,251.2 551,247.9 550,247.9 550,249.3 549,249.3 549,246.1 548,246.1 548,251.2 547,251.2 547,251.3 546,251.3 546,245.3 545,245.3 545,252.9 544,252.9 544,245.6 543,245.6 543,247.9 542,247.9 542,248.4 541,248.4 541,249.4 540,249.4 540,251.0 539,251.0 539,248.2 538,248.2 538,251.3 537,251.3 537,250.1 536,250.1 536,247.3 535,247.3 535,253.9 534,253.9 534,249.9 533,249.9 533,248.9 532,248.9 532,245.4 531,245.4 531,249.0 530,249.0 530,247.6 529,247.6 529,247.3 528,247.3 528,248.9 527,248.9 527,252.9 526,252.9 526,247.9 525,247.9 525,247.8 524,247.8 524,249.2 523,249.2 523,247.5 522,247.5 522,248.0 521,248.0 521,249.0 520,249.0 520,255.4 519,255.4 519,251.1 518,251.1 518,248.4 517,248.4 517,251.1 516,251.1 516,246.5 515,246.5 515,250.1 514,250.1 514,246.8 513,246.8 513,248.4 512,248.4 512,250.2 511,250.2 511,246.3 510,246.3 510,252.5 509,252.5 509,251.3 508,251.3 508,247.7 507,247.7 507,247.2 506,247.2 506,248.8 505,248.8 505,249.4 504,249.4 504,251.5 503,251.5 503,254.9 502,254.9 502,249.7 501,249.7 501,251.9 500,251.9 500,247.4 499,247.4 499,254.7 498,254.7 498,249.9 497,249.9 497,246.0 496,246.0 496,243.3 495,243.3 495,250.2 494,250.2 494,247.7 493,247.7 493,247.7 492,247.7 492,250.7 491,250.7 491,248.4 490,248.4 490,248.0 489,248.0 489,250.1 488,250.1 488,249.5 487,249.5 487,247.0 486,247.0 486,251.4 485,251.4 485,247.6 484,247.6 484,250.0 483,250.0 483,246.6 482,246.6 482,248.5 481,248.5 481,250.0 480,250.0 480,248.6 479,248.6 479,248.7 478,248.7 478,247.5 477,247.5 477,254.6 476,254.6 476,249.5 475,249.5 475,250.1 474,250.1 474,242.5 473,242.5 473,250.0 472,250.0 472,247.6 471,247.6 471,248.5 470,248.5 470,253.5 469,253.5 469,247.9 468,247.9 468,249.7 467,249.7 467,248.4 466,248.4 466,250.4 465,250.4 465,248.9 464,248.9 464,251.1 463,251.1 463,246.6 462,246.6 462,251.8 461,251.8 461,242.5 460,242.5 460,248.9 459,248.9 459,248.8 458,248.8 458,247.5 457,247.5 457,249.0 456,249.0 456,248.9 455,248.9 455,248.0 454,248.0 454,252.3 453,252.3 453,251.9 452,251.9 452,245.9 451,245.9 451,251.4 450,251.4 450,248.0 449,248.0 449,249.9 448,249.9 448,247.2 447,247.2 447,247.5 446,247.5 446,248.5 445,248.5 445,244.8 444,244.8 444,246.9 443,246.9 443,248.8 442,248.8 442,249.6 441,249.6 441,253.5 440,253.5 440,249.6 439,249.6 439,253.3 438,253.3 438,246.4 437,246.4 437,246.8 436,246.8 436,248.3 435,248.3 435,248.3 434,248.3 434,255.0 433,255.0 433,247.5 432,247.5 432,249.3 431,249.3 431,250.6 430,250.6 430,248.9 429,248.9 429,249.9 428,249.9 428,248.1 427,248.1 427,250.3 426,250.3 426,247.9 425,247.9 425,250.9 424,250.9 424,246.0 423,246.0 423,253.4 422,253.4 422,247.5 421,247.5 421,249.5 420,249.5 420,248.5 419,248.5 419,250.4 418,250.4 418,252.8 417,252.8 417,251.7 416,251.7 416,251.9 415,251.9 415,248.5 414,248.5 414,246.6 413,246.6 413,251.3 412,251.3 412,242.3 411,242.3 411,250.8 410,250.8 410,246.5 409,246.5 409,244.6 408,244.6 408,250.5 407,250.5 407,250.0 406,250.0 406,251.2 405,251.2 405,248.6 404,248.6 404,250.4 403,250.4 403,255.6 402,255.6 402,252.5 401,252.5 401,253.5 400,253.5 400,247.2 399,247.2 399,246.2 398,246.2 398,247.8 397,247.8 397,246.8 396,246.8 396,248.1 395,248.1 395,249.5 394,249.5 394,250.8 393,250.8 393,248.8 392,248.8 392,252.3 391,252.3 391,251.2 390,251.2 390,244.7 389,244.7 389,252.5 388,252.5 388,246.6 387,246.6 387,249.0 386,249.0 386,246.2 385,246.2 385,251.1 384,251.1 384,254.5 383,254.5 383,254.9 382,254.9 382,254.6 381,254.6 381,249.2 380,249.2 380,248.3 379,248.3 379,248.2 378,248.2 378,250.4 377,250.4 377,249.1 376,249.1 376,249.7 375,249.7 375,250.5 374,250.5 374,247.4 373,247.4 373,242.7 372,242.7 372,252.2 371,252.2 371,247.8 370,247.8 370,248.3 369,248.3 369,246.5 368,246.5 368,249.0 367,249.0 367,249.6 366,249.6 366,247.7 365,247.7 365,247.2 364,247.2 364,249.9 363,249.9 363,251.8 362,251.8 362,249.3 361,249.3 361,251.6 360,251.6 360,249.7 359,249.7 359,247.6 358,247.6 358,247.6 357,247.6 357,252.7 356,252.7 356,246.3 355,246.3 355,252.2 354,252.2 354,247.9 353,247.9 353,249.9 352,249.9 352,248.6 351,248.6 351,245.8 350,245.8 350,250.0 349,250.0 349,248.6 348,248.6 348,248.4 347,248.4 347,247.1 346,247.1 346,242.9 345,242.9 345,254.4 344,254.4 344,248.3 343,248.3 343,249.9 342,249.9 342,254.4 341,254.4 341,248.4 340,248.4 340,248.8 339,248.8 339,244.6 338,244.6 338,249.4 337,249.4 337,247.0 336,247.0 336,250.4 335,250.4 335,250.3 334,250.3 334,246.6 333,246.6 333,246.5 332,246.5 332,248.9 331,248.9 331,248.2 330,248.2 330,245.9 329,245.9 329,248.1 328,248.1 328,247.9 327,247.9 327,246.1 326,246.1 326,253.7 325,253.7 325,247.4 324,247.4 324,248.2 323,248.2 323,248.8 322,248.8 322,245.9 321,245.9 321,248.7 320,248.7 320,246.7 319,246.7 319,243.1 318,243.1 318,243.2 317,243.2 317,243.9 316,243.9 316,243.3 315,243.3 315,238.8 314,238.8 314,239.9 313,239.9 313,230.9 312,230.9 312,217.8 311,217.8 311,218.1 310,218.1 310,218.2 309,218.2 309,216.2 308,216.2 308,217.2 307,217.2 307,216.5 306,216.5 306,218.0 305,218.0 305,220.6 304,220.6 304,219.3 303,219.3 303,219.4 302,219.4 302,218.7 301,218.7 301,216.2 300,216.2 300,216.9 299,216.9 299,216.3 298,216.3 298,215.4 297,215.4 297,215.6 296,215.6 296,215.6 295,215.6 295,215.5 294,215.5 294,215.8 293,215.8 293,215.1 292,215.1 292,215.3 291,215.3 291,215.3 290,215.3 290,215.0 289,215.0 289,215.7 288,215.7 288,215.6 287,215.6 287,216.3 286,216.3 286,215.9 285,215.9 285,216.1 284,216.1 284,216.7 283,216.7 283,216.6 282,216.6 282,216.6 281,216.6 281,216.2 280,216.2 280,215.7 279,215.7 279,215.6 278,215.6 278,216.1 277,216.1 277,216.0 276,216.0 276,215.8 275,215.8 275,216.0 274,216.0 274,216.0 273,216.0 273,216.5 272,216.5 272,215.8 271,215.8 271,215.6 270,215.6 270,216.2 269,216.2 269,216.6 268,216.6 268,216.0 267,216.0 267,215.9 266,215.9 266,215.7 265,215.7 265,215.7 264,215.7 264,215.7 263,215.7 263,215.3 262,215.3 262,215.4 261,215.4 261,215.6 260,215.6 260,216.2 259,216.2 259,216.2 258,216.2 258,216.4 257,216.4 257,215.5 256,215.5 256,215.9 255,215.9 255,215.6 254,215.6 254,215.7 253,215.7 253,216.5 252,216.5 252,216.8 251,216.8 251,216.6 250,216.6 250,215.2 249,215.2 249,215.8 248,215.8 248,216.3 247,216.3 247,215.9 246,215.9 246,215.2 245,215.2 245,215.4 244,215.4 244,215.8 243,215.8 243,215.7 242,215.7 242,215.8 241,215.8 241,216.0 240,216.0 240,215.7 239,215.7 239,216.6 238,216.6 238,216.2 237,216.2 237,215.8 236,215.8 236,216.3 235,216.3 235,215.8 234,215.8 234,216.7 233,216.7 233,216.2 232,216.2 232,216.1 231,216.1 231,216.0 230,216.0 230,216.0 229,216.0 229,215.1 228,215.1 228,215.6 227,215.6 227,216.3 226,216.3 226,216.2 225,216.2 225,215.9 224,215.9 224,215.8 223,215.8 223,215.8 222,215.8 222,216.4 221,216.4 221,216.2 220,216.2 220,215.6 219,215.6 219,216.2 218,216.2 218,215.6 217,215.6 217,215.3 216,215.3 216,215.8 215,215.8 215,216.0 214,216.0 214,215.7 213,215.7 213,215.9 212,215.9 212,216.3 211,216.3 211,216.1 210,216.1 210,216.1 209,216.1 209,215.2 208,215.2 208,215.4 207,215.4 207,216.1 206,216.1 206,215.9 205,215.9 205,215.5 204,215.5 204,215.7 203,215.7 203,215.9 202,215.9 202,215.9 201,215.9 201,216.8 200,216.8 200,216.0 199,216.0 199,215.6 198,215.6 198,215.7 197,215.7 197,216.0 196,216.0 196,216.4 195,216.4 195,216.5 194,216.5 194,215.8 193,215.8 193,215.7 192,215.7 192,216.1 191,216.1 191,216.3 190,216.3 190,216.4 189,216.4 189,215.8 188,215.8 188,217.0 187,217.0 187,216.8 186,216.8 186,216.0 185,216.0 185,215.3 184,215.3 184,215.7 183,215.7 183,215.5 182,215.5 182,215.1 181,215.1 181,215.5 180,215.5 180,215.1 179,215.1 179,215.6 178,215.6 178,215.5 177,215.5 177,215.6 176,215.6 176,215.8 175,215.8 175,216.1 174,216.1 174,216.0 173,216.0 173,215.8 172,215.8 172,216.2 171,216.2 171,215.9 170,215.9 170,215.4 169,215.4 169,216.3 168,216.3 168,216.2 167,216.2 167,215.6 166,215.6 166,215.9 165,215.9 165,215.5 164,215.5 164,215.5 163,215.5 163,216.2 162,216.2 162,216.8 161,216.8 161,217.0 160,217.0 160,216.5 159,216.5 159,215.3 158,215.3 158,215.3 157,215.3 157,215.9 156,215.9 156,216.7 155,216.7 155,217.5 154,217.5 154,217.2 153,217.2 153,216.4 152,216.4 152,215.5 151,215.5 151,214.7 150,214.7 150,215.6 149,215.6 149,217.6 148,217.6 148,218.2 147,218.2 147,217.8 146,217.8 146,215.5 145,215.5 145,214.3 144,214.3 144,214.4 143,214.4 143,217.3 142,217.3 142,219.0 141,219.0 141,217.8 140,217.8 140,215.9 139,215.9 139,213.6 138,213.6 138,213.3 137,213.3 137,216.9 136,216.9 136,220.8 135,220.8 135,219.4 134,219.4 134,216.7 133,216.7 133,213.6 132,213.6 132,211.7 131,211.7 131,216.4 130,216.4 130,222.0 129,222.0 129,220.6 128,220.6 128,224.3 127,224.3 127,224.8 126,224.8 126,228.9 125,228.9 125,233.8 124,233.8 124,233.9 123,233.9 123,230.1 122,230.1 122,233.2 121,233.2 121,228.7 120,228.7 120,227.0 119,227.0 119,221.8 118,221.8 118,221.9 117,221.9 117,220.4 116,220.4 116,219.4 115,219.4 115,219.2 114,219.2 114,218.9 113,218.9 113,215.2 112,215.2 112,214.6 111,214.6 111,216.0 110,216.0 110,216.3 109,216.3 109,215.6 108,215.6 108,216.4 107,216.4 107,216.8 106,216.8 106,216.1 105,216.1 105,215.5 104,215.5 104,216.2 103,216.2 103,216.1 102,216.1 102,216.3 101,216.3 101,216.1 100,216.1 100,216.1 99,216.1 99,216.1 98,216.1 98,216.3 97,216.3 97,216.5 96,216.5 96,216.3 95,216.3 95,215.7 94,215.7 94,215.6 93,215.6 93,215.7 92,215.7 92,215.6 91,215.6 91,216.1 90,216.1 90,216.3 89,216.3 89,217.8 88,217.8 88,217.1 87,217.1 87,216.3 86,216.3 86,216.7 85,216.7 85,216.0 84,216.0 84,215.6 83,215.6 83,215.7 82,215.7 82,216.3 81,216.3 81,216.1 80,216.1 80,216.4 79,216.4Z" fill="#45d7a6"/>
  <rect x="79" y="145" width="983" height="3" fill="rgb(225,228,159)" fill-opacity="0.6"/>
  <rect x="79" y="169.5" width="983" height="3.5" fill="#b4e6f1"/>
  <rect x="95.5" y="84.5" width="17" height="17" fill="#4a4a4a" stroke="#a9a9a9" stroke-width="1"/>
  <path d="M96,84.8 L112.2,84.8 L96,101 Z" fill="#a6a6a6"/>
  <g fill="#a9d6c0"><rect x="90.5" y="242" width="1.7" height="4.5"/><rect x="94.5" y="240" width="1.7" height="6.5"/><rect x="98.5" y="239" width="1.7" height="7.5"/><rect x="102.2" y="236" width="1.8" height="10.5"/></g>
  <path d="M79,248 L90,259 M79,252 L86,259" stroke="#5fd0a8" stroke-width="1.2"/>
  <path d="M79,250 L88,259" stroke="#062a1c" stroke-width="1.3"/>
</svg>
<div class="gl" style="left:80px;top:66px;font-size:13.5px;color:#f2f7f4;-webkit-text-stroke:0.35px currentColor">ZOOM0013_TrLR 48000 1</div>

<!-- track 2 -->
<div class="a" style="left:0;top:265px;width:76px;height:193px;background:#272727"></div>
<div class="a" style="left:77px;top:265px;width:985px;height:193px;background:#1e1e1e"></div>
<div class="a" style="left:76px;top:265px;width:1px;height:193px;background:#353535"></div>
<div class="btn" style="left:-24px;top:276px;width:26px;height:27px;background:#1f1f1f;border-color:#333"></div>
<div class="btn" style="left:9px;top:275px;width:27px;height:28px;background:#1f1f1f;border-color:#333"></div>

<div class="btn" style="left:42px;top:275px;width:27px;height:28px;background:#262626;border-color:#333"></div>
<div class="btn" style="left:9px;top:344px;width:26px;height:26px;background:#1f1f1f;border-color:#333"></div>
<div class="btn" style="left:-24px;top:344px;width:26px;height:26px;background:#1f1f1f;border-color:#333"></div>
<div class="a" style="left:0;top:376px;width:36px;height:28px;background:#2b2b2b;border-radius:0 3px 3px 0"></div>
<div class="a" style="left:0;top:428px;width:36px;height:28px;background:#2b2b2b;border-radius:0 3px 3px 0"></div>
<svg class="a" style="left:0;top:0" width="76" height="470">
<circle cx="22.5" cy="324.5" r="2.1" fill="#c4c4c4"/>
<path d="M18,320.0 A6.5,6.5 0 0 0 18,329.0" stroke="#c4c4c4" stroke-width="1.3" fill="none"/>
<path d="M27,320.0 A6.5,6.5 0 0 1 27,329.0" stroke="#c4c4c4" stroke-width="1.3" fill="none"/>
<path d="M14,318.3 A10,10 0 0 0 14,330.7" stroke="#c4c4c4" stroke-width="1.3" fill="none"/>
<path d="M31,318.3 A10,10 0 0 1 31,330.7" stroke="#c4c4c4" stroke-width="1.3" fill="none"/>
<circle cx="22.5" cy="357.5" r="6.8" stroke="#c4c4c4" stroke-width="1.5" fill="none"/>
<line x1="14.5" y1="365.5" x2="30.5" y2="349.5" stroke="#c4c4c4" stroke-width="1.5"/>
<path d="M52.8,284.5 H57.2 M55,284.5 V294 M52.8,294 H57.2" stroke="#5a5a5a" stroke-width="1.1" fill="none"/>
<path d="M19.2,294.5 V284.2 H23.2 A2.7,2.7 0 0 1 23.2,289.6 H19.2 M23.4,289.6 L25.8,294.5" stroke="#d4d4d4" stroke-width="1.25" fill="none"/>
<path d="M20,385.5 L25,390.5 L20,395.5" stroke="#4e4e4e" stroke-width="1.5" fill="none"/>
<path d="M17,440 L22.5,445.5 L28,440" stroke="#4e4e4e" stroke-width="1.5" fill="none"/>
</svg>
<div class="a" style="left:43px;top:318px;width:25px;height:139px;background:#000"></div>
<div class="a" style="left:44px;top:320px;width:10px;height:12px;background:#1e1e1e"></div>
<div class="a" style="left:56px;top:320px;width:11px;height:12px;background:#1e1e1e"></div>
<div class="a" style="left:44px;top:333px;width:23px;height:123px;background:#1f1f1f"></div>
<div class="a" style="left:44.5px;top:452.5px;width:10.5px;height:2.5px;background:#e0e040"></div>
<div class="a" style="left:56px;top:452.5px;width:10.5px;height:2.5px;background:#e0e040"></div>

<!-- playhead / selection lines -->
<svg class="a" style="left:0;top:0;z-index:2" width="1062" height="460">
  <line x1="365.5" y1="63" x2="365.5" y2="458" stroke="#6a2228" stroke-width="1.3" stroke-dasharray="2,5.3" stroke-dashoffset="-3"/>
  <rect x="458" y="57" width="2" height="401" fill="#8c2520"/>
  <path d="M357,40 L374,40 L374,50 L365.5,59 L357,50 Z" fill="#3466a8" stroke="#101a28" stroke-width="0.8"/>
  <rect x="366" y="23" width="2" height="36" fill="#3f80d2"/>
  <path d="M451,40 L468,40 L468,49.5 L459.5,58.5 L451,49.5 Z" fill="#3a8ce8" stroke="#0a1a30" stroke-width="0.8"/>
  <rect x="459" y="52" width="1" height="6" fill="#1a3a6a"/>
</svg>
<!-- band -->
<div class="a" style="left:0;top:458px;width:1062px;height:8px;background:#262626"></div>
<div class="a" style="left:0;top:457.5px;width:1062px;height:2px;background:#2d2d2d"></div>
<div class="a" style="left:0;top:465px;width:1062px;height:1px;background:#12305a"></div>
<div class="a" style="left:0;top:466px;width:1062px;height:2px;background:#4a86d0"></div>
<div class="a" style="left:0;top:468px;width:1062px;height:6px;background:#171717"></div>

<!-- panels -->
<div class="a" style="left:0;top:474px;width:1062px;height:169px;background:#171717"></div>
<div class="a" style="left:0;top:474px;width:183px;height:163px;background:#232323"></div>
<div class="a" style="left:189px;top:474px;width:367px;height:163px;background:#232323"></div>
<div class="a" style="left:562px;top:474px;width:500px;height:163px;background:#232323"></div>
<div class="lbl" style="left:-11px;top:548px;font-size:89px;color:#9a9a9a;-webkit-text-stroke:0;transform:scaleX(0.93);transform-origin:100% 0;width:100px;text-align:right;left:-12px"><span style="position:relative;left:-3px">6</span>4</div>

<div class="lbl" style="left:207px;top:487px;font-size:17px;color:#c4c4c4">Zoom</div>
<div class="lbl" style="left:580px;top:487px;font-size:17px;color:#c4c4c4">Selection/View</div>
<svg class="a" style="left:0;top:480px" width="1062" height="30">
  <rect x="264" y="11" width="12" height="1.6" fill="#b8b8b8"/>
  <rect x="264" y="15.5" width="12" height="1.6" fill="#b8b8b8"/>
  <rect x="264" y="20" width="12" height="1.6" fill="#b8b8b8"/>
  <rect x="705" y="11" width="12" height="1.6" fill="#b8b8b8"/>
  <rect x="705" y="15.5" width="12" height="1.6" fill="#b8b8b8"/>
  <rect x="705" y="20" width="12" height="1.6" fill="#b8b8b8"/>
</svg>
<svg class="a" style="left:0;top:0" width="500" height="640" fill="none" stroke="#b4b4b4" stroke-width="1.8" stroke-linecap="butt">
<line x1="275.5" y1="530.5" x2="275.5" y2="548.5"/><path d="M272.3,531.5 L275.5,527.5 L278.7,531.5 Z" fill="#b4b4b4" stroke="none"/><path d="M272.3,547.5 L275.5,551.5 L278.7,547.5 Z" fill="#b4b4b4" stroke="none"/>
<circle cx="286" cy="539" r="6"/><line x1="290.3" y1="543.3" x2="296.5" y2="549.5" stroke-width="2.6" stroke-linecap="round"/><line x1="282.5" y1="539" x2="289.5" y2="539"/><line x1="286" y1="535.5" x2="286" y2="542.5"/>
<line x1="318" y1="530" x2="339" y2="530"/><path d="M319,526.8 L315,530 L319,533.2 Z" fill="#b4b4b4" stroke="none"/><path d="M338,526.8 L342,530 L338,533.2 Z" fill="#b4b4b4" stroke="none"/>
<circle cx="328.5" cy="540.5" r="6"/><line x1="332.8" y1="544.8" x2="339.0" y2="551.0" stroke-width="2.6" stroke-linecap="round"/><line x1="325.0" y1="540.5" x2="332.0" y2="540.5"/><line x1="328.5" y1="537.0" x2="328.5" y2="544.0"/>
<circle cx="372.5" cy="538.5" r="6"/><line x1="376.8" y1="542.8" x2="383" y2="549" stroke-width="2.6" stroke-linecap="round"/><line x1="369.0" y1="538.5" x2="376.0" y2="538.5"/>
<path d="M369.5,530.5 L372.5,527 L375.5,530.5 Z" fill="#b4b4b4" stroke="none"/>
<path d="M369.5,547.5 L372.5,551 L375.5,547.5 Z" fill="#b4b4b4" stroke="none"/>
<path d="M365,535.5 L361.5,538.5 L365,541.5 Z" fill="#b4b4b4" stroke="none"/>
<path d="M380,535.5 L383.5,538.5 L380,541.5 Z" fill="#b4b4b4" stroke="none"/>
<path d="M409,533 V536.5 L412.5,541 L409,545.5 V549.5"/>
<circle cx="422.5" cy="540" r="6.3"/><line x1="427.0" y1="544.5" x2="433" y2="550" stroke-width="2.6" stroke-linecap="round"/>
<circle cx="461.5" cy="542.5" r="7.8"/>
<path d="M461.5,542.5 L461.5,534.7 A7.8,7.8 0 0 1 467.3,537.3 Z" fill="#b4b4b4" stroke="none"/>
<line x1="458" y1="530" x2="465" y2="530" stroke-width="2.2"/>
<line x1="461.5" y1="531" x2="461.5" y2="534.5"/>
<line x1="451.5" y1="533.5" x2="455" y2="536.5" stroke-width="2.4"/>
<line x1="275.5" y1="569.5" x2="275.5" y2="587.5"/><path d="M272.3,570.5 L275.5,566.5 L278.7,570.5 Z" fill="#b4b4b4" stroke="none"/><path d="M272.3,586.5 L275.5,590.5 L278.7,586.5 Z" fill="#b4b4b4" stroke="none"/>
<circle cx="286" cy="578" r="6"/><line x1="290.3" y1="582.3" x2="296.5" y2="588.5" stroke-width="2.6" stroke-linecap="round"/><line x1="282.5" y1="578" x2="289.5" y2="578"/>
<line x1="319" y1="569" x2="339.5" y2="569"/><path d="M320,565.8 L316,569 L320,572.2 Z" fill="#b4b4b4" stroke="none"/><path d="M338.5,565.8 L342.5,569 L338.5,572.2 Z" fill="#b4b4b4" stroke="none"/>
<circle cx="329" cy="579.5" r="6"/><line x1="333.3" y1="583.8" x2="339.5" y2="590.0" stroke-width="2.6" stroke-linecap="round"/><line x1="325.5" y1="579.5" x2="332.5" y2="579.5"/>
<path d="M364,572.5 V576 L360.5,580.5 L364,585 V589"/>
<circle cx="378.5" cy="579.5" r="6.3"/><line x1="383.0" y1="584.0" x2="389" y2="589" stroke-width="2.6" stroke-linecap="round"/>
<path d="M404.5,572.5 V576 L401,580.5 L404.5,585 V589"/>
<path d="M410.5,572.5 V576 L414,580.5 L410.5,585 V589"/>
<circle cx="422.5" cy="579.5" r="6.3"/><line x1="427.0" y1="584.0" x2="433" y2="589" stroke-width="2.6" stroke-linecap="round"/>
<line x1="449.5" y1="568.5" x2="456.5" y2="568.5"/><line x1="449.5" y1="589.5" x2="456.5" y2="589.5"/>
<line x1="453" y1="573.5" x2="453" y2="584.5"/><path d="M449.8,574.5 L453,570.5 L456.2,574.5 Z" fill="#b4b4b4" stroke="none"/><path d="M449.8,583.5 L453,587.5 L456.2,583.5 Z" fill="#b4b4b4" stroke="none"/>
<circle cx="463.5" cy="579.5" r="6"/><line x1="467.8" y1="583.8" x2="474" y2="589" stroke-width="2.6" stroke-linecap="round"/><line x1="460.0" y1="579.5" x2="467.0" y2="579.5"/><line x1="463.5" y1="576.0" x2="463.5" y2="583.0"/>
</svg>

<div class="lbl" style="left:653px;top:525px">Start</div>
<div class="lbl" style="left:761px;top:525px">End</div>
<div class="lbl" style="left:868px;top:525px;font-size:16.4px">Duration</div>
<div class="lbl" style="left:578px;top:554px">Selection</div>
<div class="lbl" style="left:578px;top:586px">View</div>
<div class="val" style="left:656px;top:554px">0:12.951</div>
<div class="val" style="left:764px;top:554px">0:12.951</div>
<div class="val" style="left:871px;top:554px">0:00.000</div>
<div class="val" style="left:656px;top:586px">0:09.862</div>
<div class="val" style="left:764px;top:586px">0:20.562</div>
<div class="val" style="left:871px;top:586px">0:10.699</div>

<!-- meter panel -->
<div class="a" style="left:0;top:643px;width:1062px;height:136px;background:#232323"></div>
<div class="a" style="left:0;top:691px;width:1062px;height:58px;background:#000"></div>
<div class="a" style="left:0;top:692px;width:1062px;height:27px;background:#1d1d1d"></div>
<div class="a" style="left:0;top:721px;width:1062px;height:27px;background:#1d1d1d"></div>
<div class="a" style="left:0;top:692px;width:524px;height:27px;background:#3ded4a"></div>
<div class="a" style="left:524px;top:692px;width:376px;height:27px;background:#f3d04a"></div>
<div class="a" style="left:0;top:721px;width:524px;height:27px;background:#3ded4a"></div>
<div class="a" style="left:524px;top:721px;width:376px;height:27px;background:#f3d04a"></div>
<div class="a" style="left:900px;top:692px;width:32px;height:27px;background:#f04a46"></div>
<div class="a" style="left:900px;top:721px;width:12px;height:27px;background:#f04a46"></div>
<div class="a" style="left:950px;top:692px;width:1.6px;height:27px;background:#e8d81a"></div>
<div class="a" style="left:972.4px;top:721px;width:1.6px;height:27px;background:#e8d81a"></div>
<div class="tick" style="left:25px;top:749px;height:3px;background:#9a9a9a"></div>
<div class="tick" style="left:56px;top:749px;height:6px;background:#9a9a9a"></div>
<div class="rl" style="left:37px;top:761px;width:40px;text-align:center;font-size:14px;color:#a4a4a4">-33</div>
<div class="tick" style="left:87px;top:749px;height:3px;background:#9a9a9a"></div>
<div class="tick" style="left:119px;top:749px;height:3px;background:#9a9a9a"></div>
<div class="tick" style="left:150px;top:749px;height:6px;background:#9a9a9a"></div>
<div class="rl" style="left:131px;top:761px;width:40px;text-align:center;font-size:14px;color:#a4a4a4">-30</div>
<div class="tick" style="left:181px;top:749px;height:3px;background:#9a9a9a"></div>
<div class="tick" style="left:213px;top:749px;height:3px;background:#9a9a9a"></div>
<div class="tick" style="left:244px;top:749px;height:6px;background:#9a9a9a"></div>
<div class="rl" style="left:225px;top:761px;width:40px;text-align:center;font-size:14px;color:#a4a4a4">-27</div>
<div class="tick" style="left:275px;top:749px;height:3px;background:#9a9a9a"></div>
<div class="tick" style="left:307px;top:749px;height:3px;background:#9a9a9a"></div>
<div class="tick" style="left:338px;top:749px;height:6px;background:#9a9a9a"></div>
<div class="rl" style="left:319px;top:761px;width:40px;text-align:center;font-size:14px;color:#a4a4a4">-24</div>
<div class="tick" style="left:369px;top:749px;height:3px;background:#9a9a9a"></div>
<div class="tick" style="left:401px;top:749px;height:3px;background:#9a9a9a"></div>
<div class="tick" style="left:432px;top:749px;height:6px;background:#9a9a9a"></div>
<div class="rl" style="left:413px;top:761px;width:40px;text-align:center;font-size:14px;color:#a4a4a4">-21</div>
<div class="tick" style="left:463px;top:749px;height:3px;background:#9a9a9a"></div>
<div class="tick" style="left:495px;top:749px;height:3px;background:#9a9a9a"></div>
<div class="tick" style="left:526px;top:749px;height:6px;background:#9a9a9a"></div>
<div class="rl" style="left:507px;top:761px;width:40px;text-align:center;font-size:14px;color:#a4a4a4">-18</div>
<div class="tick" style="left:557px;top:749px;height:3px;background:#9a9a9a"></div>
<div class="tick" style="left:589px;top:749px;height:3px;background:#9a9a9a"></div>
<div class="tick" style="left:620px;top:749px;height:6px;background:#9a9a9a"></div>
<div class="rl" style="left:601px;top:761px;width:40px;text-align:center;font-size:14px;color:#a4a4a4">-15</div>
<div class="tick" style="left:651px;top:749px;height:3px;background:#9a9a9a"></div>
<div class="tick" style="left:683px;top:749px;height:3px;background:#9a9a9a"></div>
<div class="tick" style="left:714px;top:749px;height:6px;background:#9a9a9a"></div>
<div class="rl" style="left:695px;top:761px;width:40px;text-align:center;font-size:14px;color:#a4a4a4">-12</div>
<div class="tick" style="left:745px;top:749px;height:3px;background:#9a9a9a"></div>
<div class="tick" style="left:777px;top:749px;height:3px;background:#9a9a9a"></div>
<div class="tick" style="left:808px;top:749px;height:6px;background:#9a9a9a"></div>
<div class="rl" style="left:789px;top:761px;width:40px;text-align:center;font-size:14px;color:#a4a4a4">-9</div>
<div class="tick" style="left:839px;top:749px;height:3px;background:#9a9a9a"></div>
<div class="tick" style="left:871px;top:749px;height:3px;background:#9a9a9a"></div>
<div class="tick" style="left:902px;top:749px;height:6px;background:#9a9a9a"></div>
<div class="rl" style="left:883px;top:761px;width:40px;text-align:center;font-size:14px;color:#a4a4a4">-6</div>
<div class="tick" style="left:933px;top:749px;height:3px;background:#9a9a9a"></div>
<div class="tick" style="left:965px;top:749px;height:3px;background:#9a9a9a"></div>
<div class="tick" style="left:996px;top:749px;height:6px;background:#9a9a9a"></div>
<div class="rl" style="left:977px;top:761px;width:40px;text-align:center;font-size:14px;color:#a4a4a4">-3</div>
<div class="tick" style="left:1027px;top:749px;height:3px;background:#9a9a9a"></div>
<div class="tick" style="left:1059px;top:749px;height:3px;background:#9a9a9a"></div>

<!-- status bar -->
<div class="a" style="left:0;top:779px;width:1062px;height:3px;background:#171717"></div>
<div class="a" style="left:0;top:782px;width:1062px;height:17px;background:#232323"></div>
<div class="sep" style="left:374px"></div>
<div class="sep" style="left:449px"></div>
<div class="sep" style="left:524px"></div>
<div class="sep" style="left:733px"></div>
<div class="sep" style="left:824px"></div>
<div class="sep" style="left:923px"></div>
<div class="sep" style="left:1044px"></div>
<div class="sb" style="left:539px;font-size:17px">48000 Hz • 32-bit Mixing</div>
<div class="sb" style="left:746px">76,87 MB</div>
<div class="sb" style="left:849px">3:20,003</div>
<div class="sb" style="left:935px">60,86 GB free</div>

</body></html>
